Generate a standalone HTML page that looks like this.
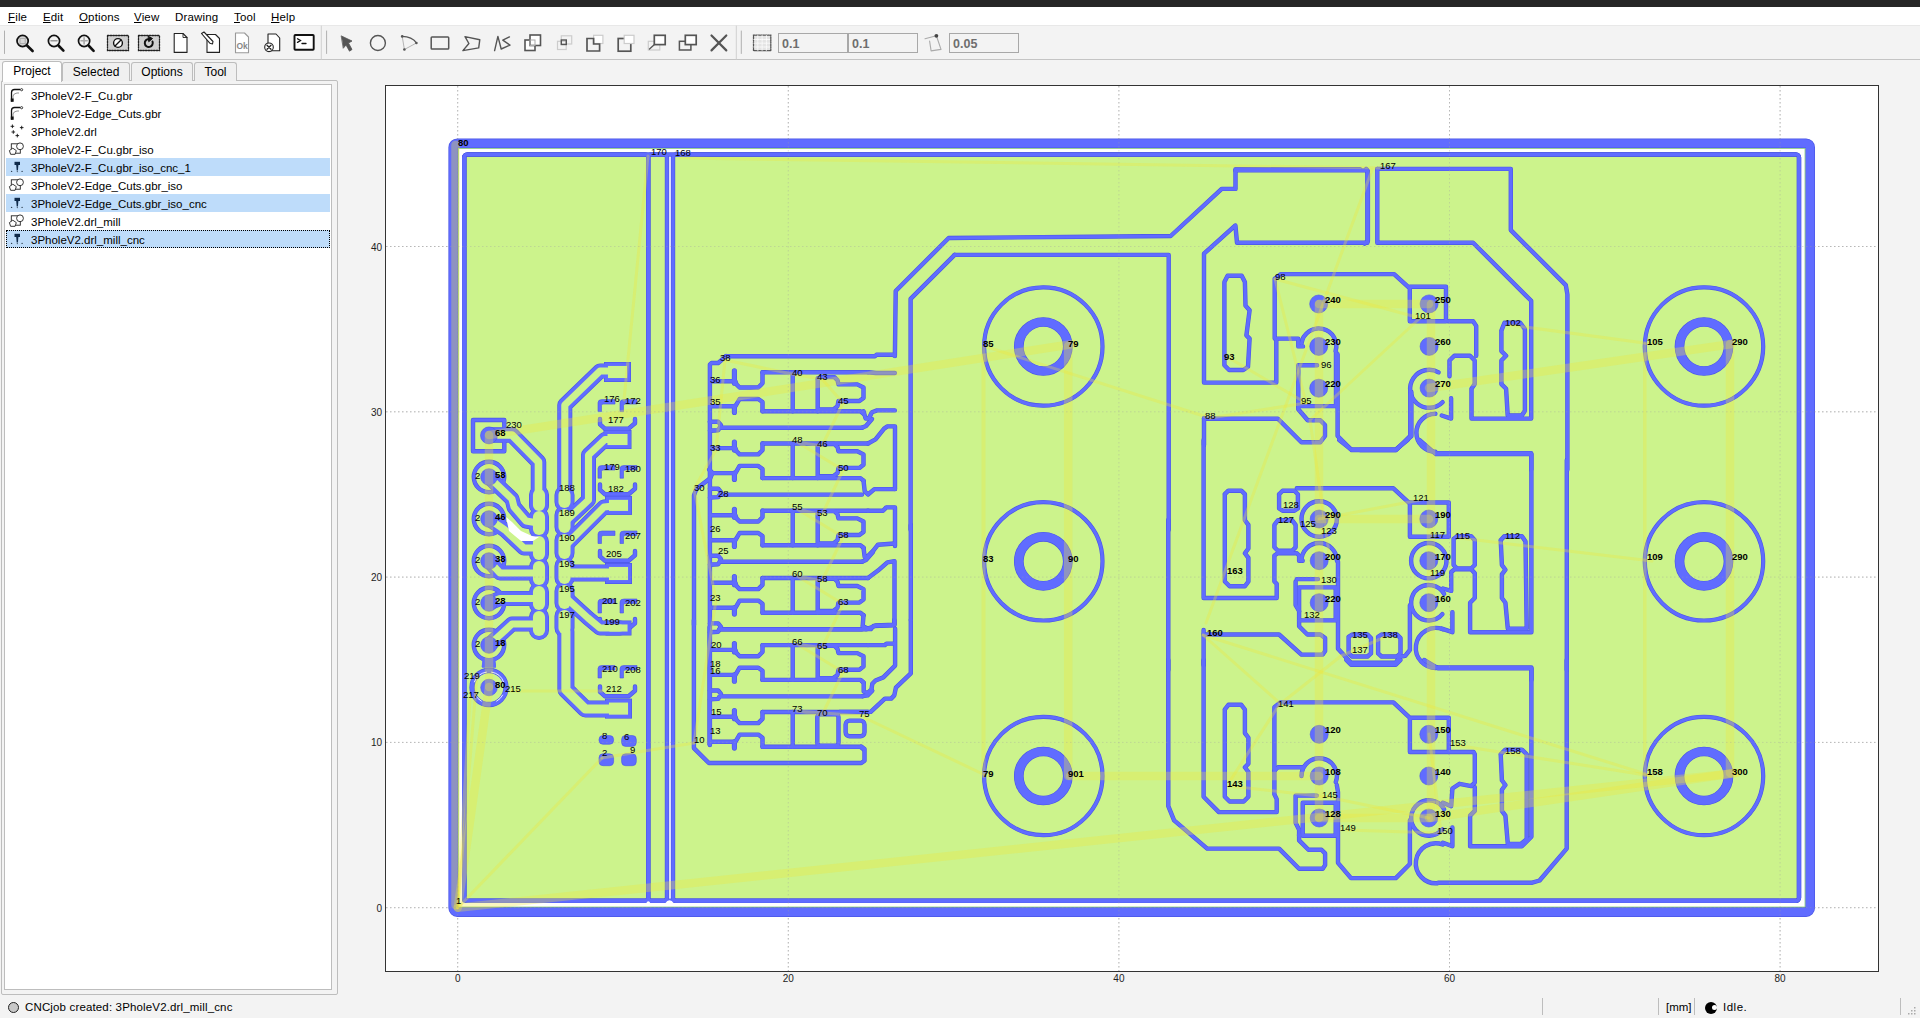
<!DOCTYPE html>
<html><head><meta charset="utf-8">
<style>
*{box-sizing:border-box;margin:0;padding:0}
html,body{width:1920px;height:1018px;overflow:hidden;background:#f3f3f3;font-family:"Liberation Sans",sans-serif;color:#000}
.abs{position:absolute}
#topbar{left:0;top:0;width:1920px;height:7px;background:#262626}
#menubar{left:0;top:7px;width:1920px;height:18px;background:#fff}
.menu{position:absolute;top:3px;font-size:11.5px;line-height:14px;letter-spacing:0.15px}
.menu u{text-decoration:underline;text-underline-offset:1px}
#toolbar{left:0;top:25px;width:1920px;height:35px;background:#f3f3f3;border-top:1px solid #e8e8e8;border-bottom:1px solid #c4c4c4}
.sep{position:absolute;width:1px;background:#b9b9b9}
.tab{position:absolute;top:62px;height:19px;border:1px solid #bdbdbd;border-bottom:none;border-radius:3px 3px 0 0;background:#f0f0f0;font-size:12px;text-align:center;line-height:18px}
.row{position:absolute;left:6px;width:324px;height:18px;font-size:11.5px;line-height:18px}
.row span{position:absolute;left:25px;top:1px}
.sel{background:#bedcfa}
</style></head><body>
<div id="topbar" class="abs"></div>
<div id="menubar" class="abs">
<div class="menu" style="left:8px"><u>F</u>ile</div>
<div class="menu" style="left:43px"><u>E</u>dit</div>
<div class="menu" style="left:79px"><u>O</u>ptions</div>
<div class="menu" style="left:134px"><u>V</u>iew</div>
<div class="menu" style="left:175px">Drawing</div>
<div class="menu" style="left:234px"><u>T</u>ool</div>
<div class="menu" style="left:271px"><u>H</u>elp</div>
</div>
<div id="toolbar" class="abs"></div>
<svg class="abs" style="left:0;top:0" width="1100" height="60">
<g fill="none" stroke-linecap="round">
<line x1="4.5" y1="31" x2="4.5" y2="53.5" stroke="#b0b0b0" stroke-width="1"/>
<!-- zoom fit -->
<circle cx="22.6" cy="41" r="5.6" stroke="#111" stroke-width="1.7" fill="#d8d8d8"/>
<rect x="20" y="38.4" width="5.2" height="5.2" stroke="#aaa" stroke-width="1"/>
<line x1="27" y1="45.5" x2="32.6" y2="51" stroke="#111" stroke-width="2.6"/>
<!-- zoom out -->
<circle cx="54" cy="41" r="5.6" stroke="#111" stroke-width="1.7"/>
<line x1="51" y1="40.8" x2="57" y2="40.8" stroke="#999" stroke-width="1.6"/>
<line x1="58.4" y1="45.5" x2="63.4" y2="50.6" stroke="#111" stroke-width="2.6"/>
<!-- zoom in -->
<circle cx="84.1" cy="41" r="5.6" stroke="#111" stroke-width="1.7"/>
<line x1="81" y1="40.8" x2="87.2" y2="40.8" stroke="#aaa" stroke-width="1.6"/>
<line x1="84.1" y1="37.8" x2="84.1" y2="44" stroke="#aaa" stroke-width="1.6"/>
<line x1="88.5" y1="45.5" x2="93.6" y2="50.8" stroke="#111" stroke-width="2.6"/>
<!-- clear plot -->
<rect x="107.5" y="35.5" width="21" height="15" fill="#d0d0d0" stroke="#222" stroke-width="1.3" stroke-dasharray="1.5,1.2"/>
<circle cx="118" cy="43" r="4.4" stroke="#111" stroke-width="1.4" fill="#fff"/>
<line x1="115" y1="46" x2="121" y2="40" stroke="#111" stroke-width="1.4"/>
<!-- replot -->
<rect x="138.5" y="35.5" width="21" height="15" fill="#d0d0d0" stroke="#222" stroke-width="1.3" stroke-dasharray="1.5,1.2"/>
<path d="M152.5,41.5 A4,4 0 1 1 149,39" stroke="#111" stroke-width="2"/>
<path d="M148.5,36.5 L152.5,38.5 L149,41.5 Z" fill="#111" stroke="#111" stroke-width="1"/>
<!-- new -->
<path d="M174.2,33.5 H183 L187,37.5 V52.4 H174.2 Z" fill="#fff" stroke="#222" stroke-width="1.1" stroke-linejoin="round"/>
<path d="M183,33.5 V37.5 H187" stroke="#222" stroke-width="0.9"/>
<!-- open -->
<path d="M207,34.5 H215.5 L219.5,38.5 V52.4 H207 Z" fill="#fff" stroke="#222" stroke-width="1.1" stroke-linejoin="round"/>
<path d="M201.5,33.5 L204,32 L213,41.5 L212.5,44 L210,43.3 Z" fill="#fff" stroke="#222" stroke-width="1.1" stroke-linejoin="round"/>
<!-- ok -->
<path d="M235.5,33 H244.5 L248.5,37 V52.8 H235.5 Z" fill="#fff" stroke="#999" stroke-width="1.1" stroke-linejoin="round"/>
<text x="236.5" y="48.5" font-family="Liberation Sans" font-weight="bold" font-size="8.5" fill="#888" stroke="none">Ok</text>
<!-- delete -->
<path d="M268,34 H276 L279.7,38 V50.8 H268 Z" fill="#fff" stroke="#222" stroke-width="1.1" stroke-linejoin="round"/>
<circle cx="269" cy="47.3" r="4.3" fill="#fff" stroke="#222" stroke-width="1.1"/>
<path d="M267,45.3 L271,49.3 M271,45.3 L267,49.3" stroke="#222" stroke-width="1.3"/>
<!-- shell -->
<rect x="294.5" y="35" width="19.2" height="14.8" rx="0.8" fill="#fff" stroke="#111" stroke-width="1.9"/>
<path d="M297.5,38.8 L300.5,40.6 L297.5,42.4" stroke="#111" stroke-width="1.3"/>
<line x1="302" y1="43.5" x2="306" y2="43.5" stroke="#111" stroke-width="1.3"/>
<line x1="321.3" y1="26" x2="321.3" y2="59" stroke="#d0d0d0" stroke-width="1"/>
<line x1="326.6" y1="31" x2="326.6" y2="53.5" stroke="#b0b0b0" stroke-width="1"/>
<!-- arrow -->
<path d="M341.5,36 L352,41 L348.5,43 L352,49.5 L349.5,51.2 L346,45 L343.5,48 Z" fill="#555" stroke="#555" stroke-width="0.8" stroke-linejoin="round"/>
<circle cx="377.9" cy="43" r="7.5" stroke="#555" stroke-width="1.4"/>
<path d="M402.2,36.4 Q412,36.5 416.4,43" stroke="#555" stroke-width="1.2"/>
<path d="M402.2,36.4 L404.4,49.5 L416.4,43" stroke="#888" stroke-width="0.6"/>
<circle cx="402.2" cy="36.4" r="1.3" fill="#555" stroke="none"/><circle cx="416.4" cy="43" r="1.3" fill="#555" stroke="none"/><circle cx="404.4" cy="49.5" r="1.3" fill="#555" stroke="none"/>
<rect x="431.2" y="36.9" width="17.5" height="12.1" rx="0.8" stroke="#555" stroke-width="1.5"/>
<path d="M465,36.6 L479.8,39.7 L478.7,47.9 L462.9,50.6 L468.9,43.5 Z" stroke="#555" stroke-width="1.4" stroke-linejoin="round"/>
<path d="M494.6,50.6 L497.9,36.4 L501.2,49 L510,45.1 L502.8,40.2 L509.4,36.9" stroke="#555" stroke-width="1.4" stroke-linejoin="round"/>
<!-- geo ops -->
<rect x="525" y="40" width="10" height="10.5" fill="#fff" stroke="#555" stroke-width="1.6"/>
<rect x="530" y="35" width="10.5" height="10.5" fill="#fff" stroke="#555" stroke-width="1.6"/>
<rect x="530" y="40" width="5" height="5.5" stroke="#aaa" stroke-width="1"/>
<rect x="557.5" y="41.3" width="8.7" height="8.2" stroke="#ccc" stroke-width="1.2"/>
<rect x="561.3" y="35.8" width="10.4" height="8.2" stroke="#ccc" stroke-width="1.2"/>
<rect x="561.3" y="40" width="5" height="4.5" stroke="#555" stroke-width="1.4"/>
<rect x="593.6" y="35.3" width="9.3" height="8.2" stroke="#ccc" stroke-width="1.2" fill="#fff"/>
<path d="M587,38.5 H593.6 V44 H599.6 V51 H587 Z" stroke="#555" stroke-width="1.7"/>
<rect x="618.2" y="38.5" width="12.6" height="12.7" stroke="#555" stroke-width="1.7"/>
<rect x="624.2" y="35.3" width="9.8" height="8.2" stroke="#ccc" stroke-width="1.2" fill="#fff"/>
<rect x="648.3" y="41.3" width="11.5" height="8.7" stroke="#ccc" stroke-width="1.2"/>
<rect x="654.3" y="35.3" width="10.9" height="9.3" stroke="#555" stroke-width="1.7" fill="#fff"/>
<path d="M649.5,49 L654.5,44.5" stroke="#555" stroke-width="1.3"/>
<rect x="679.4" y="41.3" width="11.5" height="8.7" stroke="#555" stroke-width="1.5"/>
<rect x="685.3" y="35.3" width="10.9" height="9.3" stroke="#555" stroke-width="1.7" fill="#fff"/>
<path d="M711.5,35.5 L726.3,50.4 M726.3,35.5 L711.5,50.4" stroke="#555" stroke-width="2.2"/>
<line x1="736.3" y1="26" x2="736.3" y2="59" stroke="#d0d0d0" stroke-width="1"/>
<line x1="741.3" y1="31" x2="741.3" y2="53.5" stroke="#b0b0b0" stroke-width="1"/>
<!-- grid -->
<rect x="753.5" y="35.2" width="17.3" height="15.5" fill="#e4e4e4" stroke="#555" stroke-width="1.3" stroke-dasharray="1.4,1"/>
<path d="M757.8,35.5 V50.5 M762.1,35.5 V50.5 M766.4,35.5 V50.5 M753.8,39.5 H770.5 M753.8,43.2 H770.5 M753.8,47 H770.5" stroke="#fff" stroke-width="0.8" stroke-dasharray="1.2,0.9"/>
<rect x="778.5" y="33.5" width="69" height="19" fill="#f3f3f3" stroke="#a8a8a8" stroke-width="1"/>
<rect x="848.5" y="33.5" width="69" height="19" fill="#f3f3f3" stroke="#a8a8a8" stroke-width="1"/>
<path d="M925,38.8 L936.4,35.8 L941,49.4 L931.1,50.9 L929.6,41.1" stroke="#aaa" stroke-width="1.1" stroke-linejoin="round"/>
<circle cx="936.4" cy="35.8" r="1.9" fill="#444" stroke="none"/>
<rect x="949.5" y="33.5" width="69" height="19" fill="#f3f3f3" stroke="#a8a8a8" stroke-width="1"/>
</g>
<g font-family="Liberation Sans" font-size="12.5" font-weight="bold" fill="#6e6e6e">
<text x="782" y="48">0.1</text><text x="852" y="48">0.1</text><text x="953" y="48">0.05</text>
</g>
</svg>


<!-- tabs -->
<div class="abs" style="left:1px;top:80px;width:337px;height:915px;border:1px solid #bdbdbd;border-radius:2px;background:#f3f3f3"></div>
<div class="tab" style="left:2px;top:61px;width:60px;height:21px;background:#fff">Project</div>
<div class="tab" style="left:62px;width:68px">Selected</div>
<div class="tab" style="left:131px;width:62px">Options</div>
<div class="tab" style="left:194px;width:43px">Tool</div>

<!-- list -->
<div class="abs" style="left:4px;top:84px;width:328px;height:906px;background:#fff;border:1px solid #bdbdbd"></div>
<div id="list">
<div class="row" style="top:86px"><span>3PholeV2-F_Cu.gbr</span></div>
<div class="row" style="top:104px"><span>3PholeV2-Edge_Cuts.gbr</span></div>
<div class="row" style="top:122px"><span>3PholeV2.drl</span></div>
<div class="row" style="top:140px"><span>3PholeV2-F_Cu.gbr_iso</span></div>
<div class="row sel" style="top:158px"><span>3PholeV2-F_Cu.gbr_iso_cnc_1</span></div>
<div class="row" style="top:176px"><span>3PholeV2-Edge_Cuts.gbr_iso</span></div>
<div class="row sel" style="top:194px"><span>3PholeV2-Edge_Cuts.gbr_iso_cnc</span></div>
<div class="row" style="top:212px"><span>3PholeV2.drl_mill</span></div>
<div class="row sel" style="top:230px;border:1px dotted #000"><span style="left:24px;top:0px">3PholeV2.drl_mill_cnc</span></div>
</div>
<svg class="abs" style="left:0;top:0" width="40" height="250"><g transform="translate(0,0)"><path d="M11.5,101.5 V92.5 Q11.5,89.5 14.6,89.5 H20.3" fill="none" stroke="#111" stroke-width="1.3"/><circle cx="21.6" cy="89.7" r="1.1" fill="#fff" stroke="#111" stroke-width="0.8"/><path d="M13,101.5 V96 Q13.5,93.5 17,93 H19" fill="none" stroke="#777" stroke-width="0.8"/><rect x="10.8" y="98.5" width="2.8" height="3.3" fill="#111"/></g><g transform="translate(0,18)"><path d="M11.5,101.5 V92.5 Q11.5,89.5 14.6,89.5 H20.3" fill="none" stroke="#111" stroke-width="1.3"/><circle cx="21.6" cy="89.7" r="1.1" fill="#fff" stroke="#111" stroke-width="0.8"/><path d="M13,101.5 V96 Q13.5,93.5 17,93 H19" fill="none" stroke="#777" stroke-width="0.8"/><rect x="10.8" y="98.5" width="2.8" height="3.3" fill="#111"/></g><g transform="translate(0,0)"><path d="M10.6,126.3 H14.200000000000001 M12.4,124.5 V128.1" stroke="#111" stroke-width="0.9"/><path d="M19.9,127.6 H23.5 M21.7,125.8 V129.4" stroke="#111" stroke-width="0.9"/><path d="M11.5,132 H15.100000000000001 M13.3,130.2 V133.8" stroke="#111" stroke-width="0.9"/><path d="M15.5,135.6 H19.1 M17.3,133.79999999999998 V137.4" stroke="#111" stroke-width="0.9"/></g><g transform="translate(0,0)" fill="none" stroke="#222" stroke-width="0.9"><rect x="11.3" y="143.8" width="9" height="9.4"/><circle cx="20" cy="146.3" r="3.4" fill="#fff"/><path d="M12.8,148.2 L16.3,150.6 L15.1,154.3 L10.6,154.3 L9.4,150.6 Z" fill="#fff"/></g><g transform="translate(0,0)"><rect x="14.5" y="161.8" width="5.5" height="3.2" fill="#0f2a4a"/><path d="M16.2,165 H18.4 L17.9,170.5 H16.7 Z" fill="#0f2a4a"/><circle cx="11.6" cy="171.4" r="0.7" fill="#345"/><circle cx="22.1" cy="171.4" r="0.7" fill="#345"/><circle cx="17.3" cy="171.6" r="0.6" fill="#345"/></g><g transform="translate(0,36)" fill="none" stroke="#222" stroke-width="0.9"><rect x="11.3" y="143.8" width="9" height="9.4"/><circle cx="20" cy="146.3" r="3.4" fill="#fff"/><path d="M12.8,148.2 L16.3,150.6 L15.1,154.3 L10.6,154.3 L9.4,150.6 Z" fill="#fff"/></g><g transform="translate(0,36)"><rect x="14.5" y="161.8" width="5.5" height="3.2" fill="#0f2a4a"/><path d="M16.2,165 H18.4 L17.9,170.5 H16.7 Z" fill="#0f2a4a"/><circle cx="11.6" cy="171.4" r="0.7" fill="#345"/><circle cx="22.1" cy="171.4" r="0.7" fill="#345"/><circle cx="17.3" cy="171.6" r="0.6" fill="#345"/></g><g transform="translate(0,72)" fill="none" stroke="#222" stroke-width="0.9"><rect x="11.3" y="143.8" width="9" height="9.4"/><circle cx="20" cy="146.3" r="3.4" fill="#fff"/><path d="M12.8,148.2 L16.3,150.6 L15.1,154.3 L10.6,154.3 L9.4,150.6 Z" fill="#fff"/></g><g transform="translate(0,72)"><rect x="14.5" y="161.8" width="5.5" height="3.2" fill="#0f2a4a"/><path d="M16.2,165 H18.4 L17.9,170.5 H16.7 Z" fill="#0f2a4a"/><circle cx="11.6" cy="171.4" r="0.7" fill="#345"/><circle cx="22.1" cy="171.4" r="0.7" fill="#345"/><circle cx="17.3" cy="171.6" r="0.6" fill="#345"/></g></svg>

<!-- plot frame -->
<div class="abs" style="left:385px;top:85px;width:1494px;height:887px;background:#fff;border:1px solid #333"></div>

<svg width="1920" height="1018" viewBox="0 0 1920 1018" style="position:absolute;left:0;top:0">
<defs><clipPath id="pc"><rect x="386" y="86" width="1492" height="885"/></clipPath></defs>
<g clip-path="url(#pc)">
<g stroke="#c4c4c4" stroke-width="1" stroke-dasharray="1.5,2.5"><line x1="457.7" y1="86" x2="457.7" y2="971"/><line x1="788.3" y1="86" x2="788.3" y2="971"/><line x1="1118.9" y1="86" x2="1118.9" y2="971"/><line x1="1449.5" y1="86" x2="1449.5" y2="971"/><line x1="1780.1" y1="86" x2="1780.1" y2="971"/><line x1="386" y1="907.7" x2="1878" y2="907.7"/><line x1="386" y1="742.4" x2="1878" y2="742.4"/><line x1="386" y1="577.1" x2="1878" y2="577.1"/><line x1="386" y1="411.8" x2="1878" y2="411.8"/><line x1="386" y1="246.5" x2="1878" y2="246.5"/></g>
<rect x="453.3" y="143.4" width="1356.8" height="768.6" rx="4" fill="#fff" stroke="#4a56e6" stroke-width="9.8"/><rect x="453.3" y="143.4" width="1356.8" height="768.6" rx="4" fill="none" stroke="#606cff" stroke-width="8.4"/><rect x="458.4" y="148.4" width="1346.6" height="758.6" fill="none" stroke="#8ccf7a" stroke-width="0.8"/><rect x="464" y="154.5" width="1335" height="746.5" rx="3" fill="#ccf38c"/><rect x="669" y="152" width="2" height="751" fill="#fff"/>
<g fill="none" stroke="#4a56e6" stroke-linejoin="round" stroke-linecap="round"><path d="M464.2,157.0 L464.2,900.5" stroke-width="4.4"/><rect x="464.2" y="154.5" width="1334.8" height="746.3" rx="3" stroke-width="4.4"/><rect x="464.2" y="154.5" width="184.1" height="746.3" rx="3" stroke-width="4.4"/><rect x="648.3" y="154.5" width="18.7" height="746.3" rx="3" stroke-width="4.4"/><rect x="673.0" y="154.5" width="1126.0" height="746.3" rx="3" stroke-width="4.4"/><circle cx="1043.3" cy="346.5" r="59.2" stroke-width="4.2"/><circle cx="1043.3" cy="346.5" r="24.5" stroke-width="9.7"/><circle cx="1043.3" cy="561.3" r="59.2" stroke-width="4.2"/><circle cx="1043.3" cy="561.3" r="24.5" stroke-width="9.7"/><circle cx="1043.3" cy="776.0" r="59.2" stroke-width="4.2"/><circle cx="1043.3" cy="776.0" r="24.5" stroke-width="9.7"/><circle cx="1704.0" cy="346.5" r="59.2" stroke-width="4.2"/><circle cx="1704.0" cy="346.5" r="24.5" stroke-width="9.7"/><circle cx="1704.0" cy="561.3" r="59.2" stroke-width="4.2"/><circle cx="1704.0" cy="561.3" r="24.5" stroke-width="9.7"/><circle cx="1704.0" cy="776.0" r="59.2" stroke-width="4.2"/><circle cx="1704.0" cy="776.0" r="24.5" stroke-width="9.7"/><path d="M1360.0,169.3 L1235.5,169.3 L1235.5,188.9 L1221.7,188.9 L1170.7,236.0 L948.7,238.0 L895.7,291.0 L894.9,355.8" stroke-width="4.4"/><path d="M954.6,254.9 L1168.7,254.9 L1168.7,529.8" stroke-width="4.4"/><path d="M954.6,254.9 L910.6,298.9 L910.6,529.8" stroke-width="4.4"/><path d="M1367.4,170.4 L1367.4,242.7 L1237.0,242.7 L1235.4,225.4 L1204.0,253.7 L1204.0,382.6 L1276.3,382.6 L1276.3,338.6 L1298.3,338.6 L1298.3,346.4 L1303.0,346.4" stroke-width="4.4"/><path d="M1235.4,170.4 L1367.4,170.4" stroke-width="4.4"/><path d="M1274.7,338.6 L1274.7,278.8 L1281.0,274.1 L1394.1,274.1 L1409.8,288.3 L1409.8,321.3 L1446.0,321.3 L1446.0,286.7 L1409.8,286.7" stroke-width="4.4"/><path d="M1224.4,282.0 L1227.6,275.7 L1241.7,275.7 L1244.9,282.0 L1245.5,305.6 L1249.6,310.3 L1246.4,335.4 L1249.6,338.6 L1248.0,366.8 L1243.3,370.0 L1229.1,370.0 L1224.4,365.3 L1224.4,282.0" stroke-width="4.4"/><path d="M1301.5,343.4 A17.5,17.5 0 1 1 1335.6,350.9" stroke-width="4.4"/><path d="M1337.6,354.3 L1337.6,436.0 L1351.7,450.1 L1395.7,450.1 L1411.4,436.0 L1411.4,392.0" stroke-width="4.4"/><path d="M1204.0,418.7 L1277.9,418.7 L1301.4,442.3 L1320.3,442.3 L1325.0,436.0 L1325.0,425.0 L1320.3,420.3 L1307.7,420.3 L1298.3,409.3 L1298.3,365.3 L1317.1,365.3" stroke-width="4.4"/><path d="M1298.3,406.1 L1336.0,406.1 L1336.0,351.1" stroke-width="4.4"/><path d="M1377.3,168.9 L1510.8,168.9 L1510.8,230.1 L1565.8,285.1 L1567.4,294.5 L1567.4,469.8" stroke-width="4.4"/><path d="M1377.3,168.9 L1377.3,242.7 L1473.1,242.7 L1531.2,300.8 L1531.2,418.6 L1471.5,418.6 L1471.5,388.8 L1474.7,384.1 L1474.7,360.5 L1470.0,355.8 L1454.3,355.8 L1449.5,360.5 L1449.5,376.2" stroke-width="4.4"/><path d="M1448.0,321.2 L1473.1,321.2 L1476.2,325.9 L1476.2,355.8" stroke-width="4.4"/><path d="M1366.3,168.9 L1367.9,173.6 L1367.9,241.1 L1364.7,243.6" stroke-width="4.4"/><path d="M1501.4,330.6 L1504.5,322.8 L1520.2,322.8 L1524.9,329.1 L1524.9,410.8 L1521.8,415.5 L1507.7,415.5 L1506.1,388.8 L1501.4,384.1 L1501.4,360.5 L1506.1,355.8 L1501.4,351.1 L1501.4,330.6" stroke-width="4.4"/><path d="M1442.6,402.2 A19.0,19.0 0 1 1 1438.6,372.3" stroke-width="4.4"/><path d="M1451.1,398.2 L1451.1,418.6 L1441.7,415.5" stroke-width="4.4"/><path d="M1435.4,451.8 A19.0,19.0 0 0 1 1435.4,413.8" stroke-width="4.4"/><path d="M1435.4,453.2 L1531.2,453.2 L1531.2,469.8" stroke-width="4.4"/><path d="M1410.3,391.9 L1410.3,435.9 L1396.1,450.0 L1360.0,450.0" stroke-width="4.4"/><path d="M1203.6,440.0 L1203.6,598.0 L1276.7,598.0 L1276.7,583.8 L1274.4,581.5 L1274.4,555.5 L1277.9,553.2 L1296.8,553.2 L1299.1,555.5 L1299.1,560.7 L1302.7,560.7" stroke-width="4.4"/><path d="M1224.8,494.2 L1228.4,490.7 L1241.3,490.7 L1244.9,494.2 L1244.9,520.2 L1248.4,524.9 L1248.4,548.5 L1244.9,553.2 L1248.4,557.9 L1248.4,581.5 L1244.9,586.2 L1229.6,586.2 L1224.8,581.5 L1224.8,494.2" stroke-width="4.4"/><path d="M1296.8,488.3 L1393.4,488.3 L1409.9,503.7 L1409.9,536.7 L1448.8,536.7 L1448.8,502.5 L1409.9,502.5" stroke-width="4.4"/><path d="M1279.1,494.2 L1282.6,490.7 L1294.4,490.7 L1297.9,494.2 L1297.9,508.4 L1294.4,510.7 L1282.6,510.7 L1279.1,508.4 L1279.1,494.2" stroke-width="4.4"/><path d="M1274.4,524.9 L1277.9,520.2 L1292.0,520.2 L1295.6,524.9 L1295.6,547.3 L1292.0,550.8 L1277.9,550.8 L1274.4,547.3 L1274.4,524.9" stroke-width="4.4"/><circle cx="1319.2" cy="519.0" r="17.7" stroke-width="4.4"/><path d="M1301.5,560.7 A17.7,17.7 0 0 1 1336.9,560.7" stroke-width="4.4"/><path d="M1338.0,561.4 L1338.0,648.7 L1351.0,662.8 L1395.8,662.8 L1399.3,656.9 L1405.2,655.8 L1409.9,649.9 L1409.9,605.1" stroke-width="4.4"/><path d="M1299.1,587.4 L1335.7,587.4 L1335.7,620.4 L1299.1,620.4 L1299.1,587.4" stroke-width="4.4"/><path d="M1296.8,579.1 L1318.0,579.1" stroke-width="4.4"/><path d="M1295.6,581.5 L1295.6,605.1 L1299.1,611.0" stroke-width="4.4"/><path d="M1203.6,634.5 L1279.1,634.5 L1301.5,654.6 L1322.7,654.6 L1325.1,651.0 L1325.1,638.1 L1320.3,634.5 L1307.4,634.5 L1299.1,626.3 L1299.1,620.4" stroke-width="4.4"/><path d="M1348.6,636.9 L1352.2,634.5 L1367.5,634.5 L1371.0,638.1 L1371.0,653.4 L1367.5,656.5 L1352.2,656.5 L1348.6,653.4 L1348.6,636.9" stroke-width="4.4"/><path d="M1378.1,636.9 L1381.6,634.5 L1397.0,634.5 L1400.5,638.1 L1400.5,653.4 L1397.0,656.5 L1381.6,656.5 L1378.1,653.4 L1378.1,636.9" stroke-width="4.4"/><path d="M1339.2,440.0 L1351.0,449.4 L1395.8,449.4 L1407.6,440.0" stroke-width="4.4"/><path d="M1419.4,440.0 L1435.9,454.1 L1531.4,454.1 L1531.4,632.2 L1470.1,632.2 L1470.1,602.7 L1474.8,598.0 L1474.8,573.2 L1471.2,569.2 L1454.7,569.2 L1451.2,572.0 L1451.2,590.9 L1443.0,588.5" stroke-width="4.4"/><path d="M1453.6,539.0 L1457.1,536.2 L1471.2,536.2 L1474.8,540.2 L1474.8,565.0 L1471.2,568.5 L1457.1,568.5 L1453.6,565.0 L1453.6,539.0" stroke-width="4.4"/><path d="M1500.7,540.2 L1504.3,536.2 L1521.9,536.2 L1525.5,541.4 L1526.7,628.6 L1507.8,628.6 L1505.4,602.7 L1501.9,598.0 L1501.9,574.4 L1505.4,569.7 L1501.9,565.0 L1500.7,540.2" stroke-width="4.4"/><circle cx="1428.8" cy="560.7" r="17.7" stroke-width="4.4"/><path d="M1442.4,614.1 A17.7,17.7 0 1 1 1444.1,593.8" stroke-width="4.4"/><path d="M1452.4,612.1 L1452.4,632.2 L1441.8,628.6" stroke-width="4.4"/><path d="M1437.6,667.9 A20.0,20.0 0 1 1 1442.7,629.2" stroke-width="4.4"/><path d="M1437.1,667.5 L1531.4,667.5 L1531.4,680.0" stroke-width="4.4"/><path d="M1168.3,660.0 L1168.3,806.2 L1174.1,820.3 L1207.2,848.6 L1279.1,848.6 L1299.1,868.7 L1322.7,868.7 L1325.1,865.1 L1325.1,853.4 L1321.5,849.8 L1308.5,849.8 L1299.1,840.4 L1299.1,834.5" stroke-width="4.4"/><path d="M1203.6,660.0 L1203.6,796.8 L1218.9,812.1 L1276.7,812.1 L1276.7,799.1 L1274.4,794.4 L1274.4,707.2 L1280.3,702.4 L1393.4,702.4 L1409.9,717.8 L1409.9,752.0 L1448.8,752.0 L1448.8,717.8 L1409.9,717.8" stroke-width="4.4"/><path d="M1274.4,770.8 L1277.9,767.3 L1302.7,767.3" stroke-width="4.4"/><path d="M1224.8,709.5 L1228.4,704.8 L1241.3,704.8 L1244.9,709.5 L1244.9,733.1 L1248.4,737.8 L1248.4,763.7 L1244.9,767.3 L1248.4,772.0 L1248.4,796.8 L1243.7,801.5 L1229.6,801.5 L1224.8,796.8 L1224.8,709.5" stroke-width="4.4"/><path d="M1448.8,752.0 L1473.6,752.0 L1474.8,754.3 L1474.8,782.6 L1471.2,786.1 L1459.5,783.8 L1452.4,788.5 L1451.2,806.2 L1443.0,802.7" stroke-width="4.4"/><path d="M1301.5,776.0 A17.7,17.7 0 1 1 1335.8,782.1" stroke-width="4.4"/><path d="M1336.8,785.0 L1338.0,792.0 L1338.0,862.8 L1351.0,878.1 L1395.8,878.1 L1409.9,864.0 L1409.9,820.3" stroke-width="4.4"/><path d="M1442.4,829.4 A17.7,17.7 0 1 1 1444.1,809.1" stroke-width="4.4"/><path d="M1302.7,802.7 L1335.7,802.7 L1335.7,835.7 L1302.7,835.7 L1302.7,802.7" stroke-width="4.4"/><path d="M1316.8,795.6 L1295.6,795.6 L1295.6,822.7 L1299.1,829.8 L1299.1,835.7" stroke-width="4.4"/><path d="M1452.4,827.4 L1452.4,846.3 L1443.0,842.7" stroke-width="4.4"/><path d="M1437.6,883.2 A20.0,20.0 0 1 1 1442.7,844.5" stroke-width="4.4"/><path d="M1438.2,882.8 L1531.4,882.8 L1539.6,880.5 L1566.7,848.6 L1566.7,660.0" stroke-width="4.4"/><path d="M1474.8,787.3 L1474.8,810.9 L1470.1,815.6 L1470.1,846.3 L1521.9,846.3 L1531.4,836.8 L1531.4,668.3 L1438.2,668.3 L1424.1,660.0" stroke-width="4.4"/><path d="M1500.7,754.3 L1505.4,749.6 L1521.9,749.6 L1526.7,754.3 L1526.7,839.2 L1520.8,843.9 L1507.8,843.9 L1505.4,815.6 L1501.9,810.9 L1501.9,789.7 L1505.4,785.0 L1501.9,780.3 L1500.7,754.3" stroke-width="4.4"/><path d="M1346.3,660.0 L1351.0,664.7 L1395.8,664.7 L1400.5,660.0" stroke-width="4.4"/><path d="M1168.3,520.0 L1168.3,670.0" stroke-width="4.4"/><path d="M1566.8,460.0 L1566.8,670.0" stroke-width="4.4"/><path d="M710.4,381.2 L733.3,381.2" stroke-width="4.4"/><path d="M734.4,370.8 L734.4,383.2" stroke-width="5.1"/><path d="M735.4,381.2 L736.5,384.4 L739.6,387.5 L758.3,387.5 L762.5,383.3 L762.5,372.3" stroke-width="4.4"/><path d="M762.5,372.3 L868.0,372.3" stroke-width="4.4"/><path d="M792.7,372.3 L792.7,411.2" stroke-width="4.4"/><path d="M817.7,411.2 L817.7,378.2 L820.8,377.1 L834.4,377.1 L837.5,380.2 L838.5,384.4 L857.3,384.4 L863.5,387.5 L863.5,397.9 L859.4,401.0 L838.5,401.0 L837.5,406.2 L833.3,409.4 L819.0,409.4" stroke-width="4.4"/><path d="M710.4,406.2 L733.3,406.2" stroke-width="4.4"/><path d="M734.4,406.2 L734.4,412.5" stroke-width="5.1"/><path d="M735.4,406.2 L739.6,399.0 L758.3,399.0 L762.5,402.1 L762.5,411.2" stroke-width="4.4"/><path d="M762.5,411.2 L860.4,411.2 L863.5,413.7" stroke-width="4.4"/><path d="M709.9,421.8 L718.2,421.8 L721.0,425.2 L718.2,430.2 L709.9,430.7" stroke-width="4.4"/><path d="M721.0,427.7 L862.0,427.7" stroke-width="4.4"/><path d="M710.4,448.1 L733.3,448.1" stroke-width="4.4"/><path d="M734.4,442.0 L734.4,450.1" stroke-width="5.1"/><path d="M735.4,448.1 L736.5,451.3 L739.6,454.4 L758.3,454.4 L762.5,450.2 L762.5,443.5" stroke-width="4.4"/><path d="M762.5,443.5 L868.0,443.5" stroke-width="4.4"/><path d="M792.7,443.5 L792.7,478.1" stroke-width="4.4"/><path d="M817.7,478.1 L817.7,445.1 L820.8,444.0 L834.4,444.0 L837.5,447.1 L838.5,451.3 L857.3,451.3 L863.5,454.4 L863.5,464.8 L859.4,467.9 L838.5,467.9 L837.5,473.1 L833.3,476.3 L819.0,476.3" stroke-width="4.4"/><path d="M710.4,473.1 L733.3,473.1" stroke-width="4.4"/><path d="M734.4,473.1 L734.4,479.4" stroke-width="5.1"/><path d="M735.4,473.1 L739.6,465.9 L758.3,465.9 L762.5,469.0 L762.5,478.1" stroke-width="4.4"/><path d="M762.5,478.1 L860.4,478.1 L863.5,480.6" stroke-width="4.4"/><path d="M709.9,488.7 L718.2,488.7 L721.0,492.1 L718.2,497.1 L709.9,497.6" stroke-width="4.4"/><path d="M721.0,494.6 L862.0,494.6" stroke-width="4.4"/><path d="M710.4,515.2 L733.3,515.2" stroke-width="4.4"/><path d="M734.4,509.3 L734.4,517.2" stroke-width="5.1"/><path d="M735.4,515.2 L736.5,518.4 L739.6,521.5 L758.3,521.5 L762.5,517.3 L762.5,510.8" stroke-width="4.4"/><path d="M762.5,510.8 L868.0,510.8" stroke-width="4.4"/><path d="M792.7,510.8 L792.7,545.2" stroke-width="4.4"/><path d="M817.7,545.2 L817.7,512.2 L820.8,511.1 L834.4,511.1 L837.5,514.2 L838.5,518.4 L857.3,518.4 L863.5,521.5 L863.5,531.9 L859.4,535.0 L838.5,535.0 L837.5,540.2 L833.3,543.4 L819.0,543.4" stroke-width="4.4"/><path d="M710.4,540.2 L733.3,540.2" stroke-width="4.4"/><path d="M734.4,540.2 L734.4,546.5" stroke-width="5.1"/><path d="M735.4,540.2 L739.6,533.0 L758.3,533.0 L762.5,536.1 L762.5,545.2" stroke-width="4.4"/><path d="M762.5,545.2 L860.4,545.2 L863.5,547.7" stroke-width="4.4"/><path d="M709.9,555.8 L718.2,555.8 L721.0,559.2 L718.2,564.2 L709.9,564.7" stroke-width="4.4"/><path d="M721.0,561.7 L862.0,561.7" stroke-width="4.4"/><path d="M710.4,582.8 L733.3,582.8" stroke-width="4.4"/><path d="M734.4,576.5 L734.4,584.8" stroke-width="5.1"/><path d="M735.4,582.8 L736.5,586.0 L739.6,589.1 L758.3,589.1 L762.5,584.9 L762.5,578.0" stroke-width="4.4"/><path d="M762.5,578.0 L868.0,578.0" stroke-width="4.4"/><path d="M792.7,578.0 L792.7,612.8" stroke-width="4.4"/><path d="M817.7,612.8 L817.7,579.8 L820.8,578.7 L834.4,578.7 L837.5,581.8 L838.5,586.0 L857.3,586.0 L863.5,589.1 L863.5,599.5 L859.4,602.6 L838.5,602.6 L837.5,607.8 L833.3,611.0 L819.0,611.0" stroke-width="4.4"/><path d="M710.4,607.8 L733.3,607.8" stroke-width="4.4"/><path d="M734.4,607.8 L734.4,614.1" stroke-width="5.1"/><path d="M735.4,607.8 L739.6,600.6 L758.3,600.6 L762.5,603.7 L762.5,612.8" stroke-width="4.4"/><path d="M762.5,612.8 L860.4,612.8 L863.5,615.3" stroke-width="4.4"/><path d="M709.9,623.4 L718.2,623.4 L721.0,626.8 L718.2,631.8 L709.9,632.3" stroke-width="4.4"/><path d="M721.0,629.3 L862.0,629.3" stroke-width="4.4"/><path d="M710.4,649.9 L733.3,649.9" stroke-width="4.4"/><path d="M734.4,643.6 L734.4,651.9" stroke-width="5.1"/><path d="M735.4,649.9 L736.5,653.1 L739.6,656.2 L758.3,656.2 L762.5,652.0 L762.5,645.1" stroke-width="4.4"/><path d="M762.5,645.1 L868.0,645.1" stroke-width="4.4"/><path d="M792.7,645.1 L792.7,679.9" stroke-width="4.4"/><path d="M817.7,679.9 L817.7,646.9 L820.8,645.8 L834.4,645.8 L837.5,648.9 L838.5,653.1 L857.3,653.1 L863.5,656.2 L863.5,666.6 L859.4,669.7 L838.5,669.7 L837.5,674.9 L833.3,678.1 L819.0,678.1" stroke-width="4.4"/><path d="M710.4,674.9 L733.3,674.9" stroke-width="4.4"/><path d="M734.4,674.9 L734.4,681.2" stroke-width="5.1"/><path d="M735.4,674.9 L739.6,667.7 L758.3,667.7 L762.5,670.8 L762.5,679.9" stroke-width="4.4"/><path d="M762.5,679.9 L860.4,679.9 L863.5,682.4" stroke-width="4.4"/><path d="M709.9,690.5 L718.2,690.5 L721.0,693.9 L718.2,698.9 L709.9,699.4" stroke-width="4.4"/><path d="M721.0,696.4 L862.0,696.4" stroke-width="4.4"/><path d="M710.4,716.8 L733.3,716.8" stroke-width="4.4"/><path d="M734.4,710.5 L734.4,718.8" stroke-width="5.1"/><path d="M735.4,716.8 L736.5,720.0 L739.6,723.1 L758.3,723.1 L762.5,718.9 L762.5,712.0" stroke-width="4.4"/><path d="M762.5,712.0 L868.0,712.0" stroke-width="4.4"/><path d="M792.7,712.0 L792.7,746.8" stroke-width="4.4"/><rect x="817.3" y="714.3" width="21.2" height="31.4" rx="3" stroke-width="4.4"/><rect x="845.6" y="720.6" width="18.9" height="15.7" rx="4" stroke-width="4.4"/><path d="M710.4,741.8 L733.3,741.8" stroke-width="4.4"/><path d="M734.4,741.8 L734.4,748.1" stroke-width="5.1"/><path d="M735.4,741.8 L739.6,734.6 L758.3,734.6 L762.5,737.7 L762.5,746.8" stroke-width="4.4"/><path d="M762.5,746.8 L860.4,746.8 L863.5,749.3" stroke-width="4.4"/><path d="M726.0,356.2 L875.0,356.2 L876.5,354.7 L892.7,354.7 L894.8,356.0" stroke-width="4.4"/><path d="M709.9,421.9 L709.9,364.6 L711.5,363.0 L718.2,363.0 L726.0,356.2" stroke-width="4.4"/><path d="M868.0,372.3 L876.0,373.0 L894.8,373.0" stroke-width="4.4"/><path d="M863.5,411.2 L865.6,418.5 L868.8,418.5 L871.9,412.2 L877.0,410.4 L894.8,410.4" stroke-width="4.4"/><path d="M862.0,427.7 L866.0,426.0 L872.0,419.0" stroke-width="4.4"/><path d="M868.0,443.5 L875.5,439.4 L884.1,428.6 L887.4,426.4 L895.0,426.4 L895.0,489.0" stroke-width="4.4"/><path d="M863.5,480.6 L864.7,491.2 L868.0,494.5 L874.4,489.1 L895.0,489.1" stroke-width="4.4"/><path d="M868.0,510.8 L883.0,510.8 L886.3,507.4 L895.0,507.4 L895.0,546.0" stroke-width="4.4"/><path d="M863.5,547.7 L864.7,557.0 L866.2,557.7 L873.3,550.6 L878.0,544.7 L894.5,543.5" stroke-width="4.4"/><path d="M862.0,561.7 L866.0,560.0 L873.0,552.0" stroke-width="4.4"/><path d="M868.0,578.0 L878.0,570.6 L887.4,562.4 L894.5,561.2 L894.5,624.9" stroke-width="4.4"/><path d="M863.5,615.3 L862.7,626.0 L866.2,629.1 L870.9,629.1 L873.3,626.0 L893.3,625.3" stroke-width="4.4"/><path d="M719.0,629.4 L866.0,629.4" stroke-width="4.4"/><path d="M868.0,645.1 L884.9,645.1 L886.5,643.6 L894.3,643.6" stroke-width="4.4"/><path d="M895.1,628.6 L895.1,665.6 L883.3,677.4 L875.5,680.5 L872.3,683.7 L871.5,689.2 L867.6,693.1 L863.7,691.5 L863.7,682.9 L861.3,680.5" stroke-width="4.4"/><path d="M862.9,696.2 L867.6,695.4 L872.3,690.7" stroke-width="4.4"/><path d="M910.8,620.0 L910.8,673.4 L895.9,687.6 L894.3,695.4 L891.2,698.6 L884.9,698.6 L870.7,711.9 L840.1,711.9 L837.7,712.7" stroke-width="4.4"/><path d="M862.9,626.3 L867.6,628.6 L872.3,627.1 L875.5,625.5 L894.3,624.7 L894.3,620.0" stroke-width="4.4"/><path d="M861.3,746.5 L864.5,748.9 L864.5,760.7 L861.3,763.0 L708.9,763.0 L693.9,748.1 L693.9,620.0" stroke-width="4.4"/><path d="M709.6,627.1 L709.6,744.2" stroke-width="4.4"/><path d="M709.9,421.9 L709.9,745.0" stroke-width="4.4"/><path d="M910.8,525.0 L910.8,620.0" stroke-width="4.4"/><path d="M504.3,426.4 L504.3,420.0 L473.0,420.0 L473.0,451.3 L504.3,451.3 L504.3,440.5" stroke-width="4.4"/><path d="M489.0,435.0 L512.0,435.0 L538.5,462.0 L538.5,500.0" stroke-width="15.5"/><path d="M489.0,477.0 L512.0,499.0 L514.0,507.0 L526.0,521.0 L538.0,523.0" stroke-width="15.0"/><path d="M489.0,519.0 L505.0,530.0 L524.0,548.0 L538.0,548.0" stroke-width="15.0"/><path d="M489.0,561.0 L500.0,573.0 L538.0,573.0" stroke-width="15.0"/><path d="M489.0,603.0 L500.0,598.5 L538.0,598.5" stroke-width="15.0"/><path d="M489.0,645.0 L512.0,624.0 L538.0,624.0" stroke-width="15.0"/><path d="M539.0,495.0 L539.0,505.0" stroke-width="20.0"/><path d="M539.0,517.0 L539.0,529.0" stroke-width="20.0"/><path d="M539.0,542.0 L539.0,554.0" stroke-width="20.0"/><path d="M539.0,567.0 L539.0,579.0" stroke-width="20.0"/><path d="M539.0,592.0 L539.0,604.0" stroke-width="20.0"/><path d="M539.0,617.0 L539.0,630.0" stroke-width="20.0"/><path d="M564.5,495.0 L564.5,502.0" stroke-width="20.0"/><path d="M564.5,515.0 L564.5,527.0" stroke-width="20.0"/><path d="M564.5,540.0 L564.5,553.0" stroke-width="20.0"/><path d="M564.5,566.0 L564.5,578.0" stroke-width="20.0"/><path d="M564.5,591.0 L564.5,603.0" stroke-width="20.0"/><path d="M564.5,616.0 L564.5,628.0" stroke-width="20.0"/><path d="M564.8,499.0 L564.8,405.0 L600.0,371.0 L620.0,371.0" stroke-width="15.0"/><path d="M614.0,372.0 L621.0,372.0" stroke-width="20.0" stroke-linecap="square" stroke-linejoin="miter"/><path d="M565.0,522.0 L588.5,500.0 L588.5,455.0 L605.0,439.5 L620.0,439.5" stroke-width="15.0"/><path d="M613.0,439.5 L622.0,439.5" stroke-width="19.0" stroke-linecap="square" stroke-linejoin="miter"/><path d="M565.0,546.0 L604.0,507.0 L620.0,505.4" stroke-width="15.0"/><path d="M614.5,505.4 L622.5,505.4" stroke-width="19.0" stroke-linecap="square" stroke-linejoin="miter"/><path d="M565.0,573.0 L620.0,573.0" stroke-width="17.0"/><path d="M615.5,573.5 L621.5,573.5" stroke-width="21.0" stroke-linecap="square" stroke-linejoin="miter"/><path d="M565.0,597.0 L588.0,618.0 L600.0,628.0 L620.0,628.0" stroke-width="15.0"/><path d="M613.0,628.0 L624.0,628.0" stroke-width="15.0" stroke-linecap="square" stroke-linejoin="miter"/><path d="M565.9,631.3 L565.9,689.7 L585.4,709.0 L620.0,709.0" stroke-width="17.0"/><path d="M615.0,708.6 L622.0,708.6" stroke-width="20.0" stroke-linecap="square" stroke-linejoin="miter"/><path d="M600.0,418.9 L600.0,424.3 L604.8,428.6 L628.6,428.6 L635.0,423.2 L635.0,418.9" stroke-width="4.4"/><path d="M600.0,484.5 L600.0,489.9 L604.8,494.2 L628.6,494.2 L635.0,488.8 L635.0,484.5" stroke-width="4.4"/><path d="M600.0,551.0 L600.0,556.4 L604.8,560.7 L628.6,560.7 L635.0,555.3 L635.0,551.0" stroke-width="4.4"/><path d="M600.0,619.0 L600.0,624.4 L604.8,628.7 L628.6,628.7 L635.0,623.3 L635.0,619.0" stroke-width="4.4"/><path d="M600.0,686.5 L600.0,691.9 L604.8,696.2 L628.6,696.2 L635.0,690.8 L635.0,686.5" stroke-width="4.4"/><circle cx="489.0" cy="477.0" r="15.2" stroke-width="4.4"/><circle cx="489.0" cy="519.0" r="15.2" stroke-width="4.4"/><circle cx="489.0" cy="561.0" r="15.2" stroke-width="4.4"/><circle cx="489.0" cy="603.0" r="15.2" stroke-width="4.4"/><circle cx="489.0" cy="645.0" r="15.2" stroke-width="4.4"/><circle cx="489.0" cy="687.5" r="17.0" stroke-width="5.3"/><path d="M483.5,659 L494.5,659 L495.5,667 L482.5,667 Z" stroke-width="1.1" fill="#606cff"/><path d="M709.2,469.6 L712.4,472.9 L710.2,478.3 L696.2,489.1 L694.0,495.5 L694.0,625.0" stroke-width="4.4"/><path d="M1204.0,418.0 L1204.0,445.0" stroke-width="4.4"/><path d="M1203.6,630.0 L1203.6,665.0" stroke-width="4.4"/></g>
<g fill="none" stroke="#606cff" stroke-linejoin="round" stroke-linecap="round"><path d="M464.2,157.0 L464.2,900.5" stroke-width="3.2"/><rect x="464.2" y="154.5" width="1334.8" height="746.3" rx="3" stroke-width="3.2"/><rect x="464.2" y="154.5" width="184.1" height="746.3" rx="3" stroke-width="3.2"/><rect x="648.3" y="154.5" width="18.7" height="746.3" rx="3" stroke-width="3.2"/><rect x="673.0" y="154.5" width="1126.0" height="746.3" rx="3" stroke-width="3.2"/><circle cx="1043.3" cy="346.5" r="59.2" stroke-width="3.0"/><circle cx="1043.3" cy="346.5" r="24.5" stroke-width="8.5"/><circle cx="1043.3" cy="561.3" r="59.2" stroke-width="3.0"/><circle cx="1043.3" cy="561.3" r="24.5" stroke-width="8.5"/><circle cx="1043.3" cy="776.0" r="59.2" stroke-width="3.0"/><circle cx="1043.3" cy="776.0" r="24.5" stroke-width="8.5"/><circle cx="1704.0" cy="346.5" r="59.2" stroke-width="3.0"/><circle cx="1704.0" cy="346.5" r="24.5" stroke-width="8.5"/><circle cx="1704.0" cy="561.3" r="59.2" stroke-width="3.0"/><circle cx="1704.0" cy="561.3" r="24.5" stroke-width="8.5"/><circle cx="1704.0" cy="776.0" r="59.2" stroke-width="3.0"/><circle cx="1704.0" cy="776.0" r="24.5" stroke-width="8.5"/><path d="M1360.0,169.3 L1235.5,169.3 L1235.5,188.9 L1221.7,188.9 L1170.7,236.0 L948.7,238.0 L895.7,291.0 L894.9,355.8" stroke-width="3.2"/><path d="M954.6,254.9 L1168.7,254.9 L1168.7,529.8" stroke-width="3.2"/><path d="M954.6,254.9 L910.6,298.9 L910.6,529.8" stroke-width="3.2"/><path d="M1367.4,170.4 L1367.4,242.7 L1237.0,242.7 L1235.4,225.4 L1204.0,253.7 L1204.0,382.6 L1276.3,382.6 L1276.3,338.6 L1298.3,338.6 L1298.3,346.4 L1303.0,346.4" stroke-width="3.2"/><path d="M1235.4,170.4 L1367.4,170.4" stroke-width="3.2"/><path d="M1274.7,338.6 L1274.7,278.8 L1281.0,274.1 L1394.1,274.1 L1409.8,288.3 L1409.8,321.3 L1446.0,321.3 L1446.0,286.7 L1409.8,286.7" stroke-width="3.2"/><path d="M1224.4,282.0 L1227.6,275.7 L1241.7,275.7 L1244.9,282.0 L1245.5,305.6 L1249.6,310.3 L1246.4,335.4 L1249.6,338.6 L1248.0,366.8 L1243.3,370.0 L1229.1,370.0 L1224.4,365.3 L1224.4,282.0" stroke-width="3.2"/><path d="M1301.5,343.4 A17.5,17.5 0 1 1 1335.6,350.9" stroke-width="3.2"/><path d="M1337.6,354.3 L1337.6,436.0 L1351.7,450.1 L1395.7,450.1 L1411.4,436.0 L1411.4,392.0" stroke-width="3.2"/><path d="M1204.0,418.7 L1277.9,418.7 L1301.4,442.3 L1320.3,442.3 L1325.0,436.0 L1325.0,425.0 L1320.3,420.3 L1307.7,420.3 L1298.3,409.3 L1298.3,365.3 L1317.1,365.3" stroke-width="3.2"/><path d="M1298.3,406.1 L1336.0,406.1 L1336.0,351.1" stroke-width="3.2"/><path d="M1377.3,168.9 L1510.8,168.9 L1510.8,230.1 L1565.8,285.1 L1567.4,294.5 L1567.4,469.8" stroke-width="3.2"/><path d="M1377.3,168.9 L1377.3,242.7 L1473.1,242.7 L1531.2,300.8 L1531.2,418.6 L1471.5,418.6 L1471.5,388.8 L1474.7,384.1 L1474.7,360.5 L1470.0,355.8 L1454.3,355.8 L1449.5,360.5 L1449.5,376.2" stroke-width="3.2"/><path d="M1448.0,321.2 L1473.1,321.2 L1476.2,325.9 L1476.2,355.8" stroke-width="3.2"/><path d="M1366.3,168.9 L1367.9,173.6 L1367.9,241.1 L1364.7,243.6" stroke-width="3.2"/><path d="M1501.4,330.6 L1504.5,322.8 L1520.2,322.8 L1524.9,329.1 L1524.9,410.8 L1521.8,415.5 L1507.7,415.5 L1506.1,388.8 L1501.4,384.1 L1501.4,360.5 L1506.1,355.8 L1501.4,351.1 L1501.4,330.6" stroke-width="3.2"/><path d="M1442.6,402.2 A19.0,19.0 0 1 1 1438.6,372.3" stroke-width="3.2"/><path d="M1451.1,398.2 L1451.1,418.6 L1441.7,415.5" stroke-width="3.2"/><path d="M1435.4,451.8 A19.0,19.0 0 0 1 1435.4,413.8" stroke-width="3.2"/><path d="M1435.4,453.2 L1531.2,453.2 L1531.2,469.8" stroke-width="3.2"/><path d="M1410.3,391.9 L1410.3,435.9 L1396.1,450.0 L1360.0,450.0" stroke-width="3.2"/><path d="M1203.6,440.0 L1203.6,598.0 L1276.7,598.0 L1276.7,583.8 L1274.4,581.5 L1274.4,555.5 L1277.9,553.2 L1296.8,553.2 L1299.1,555.5 L1299.1,560.7 L1302.7,560.7" stroke-width="3.2"/><path d="M1224.8,494.2 L1228.4,490.7 L1241.3,490.7 L1244.9,494.2 L1244.9,520.2 L1248.4,524.9 L1248.4,548.5 L1244.9,553.2 L1248.4,557.9 L1248.4,581.5 L1244.9,586.2 L1229.6,586.2 L1224.8,581.5 L1224.8,494.2" stroke-width="3.2"/><path d="M1296.8,488.3 L1393.4,488.3 L1409.9,503.7 L1409.9,536.7 L1448.8,536.7 L1448.8,502.5 L1409.9,502.5" stroke-width="3.2"/><path d="M1279.1,494.2 L1282.6,490.7 L1294.4,490.7 L1297.9,494.2 L1297.9,508.4 L1294.4,510.7 L1282.6,510.7 L1279.1,508.4 L1279.1,494.2" stroke-width="3.2"/><path d="M1274.4,524.9 L1277.9,520.2 L1292.0,520.2 L1295.6,524.9 L1295.6,547.3 L1292.0,550.8 L1277.9,550.8 L1274.4,547.3 L1274.4,524.9" stroke-width="3.2"/><circle cx="1319.2" cy="519.0" r="17.7" stroke-width="3.2"/><path d="M1301.5,560.7 A17.7,17.7 0 0 1 1336.9,560.7" stroke-width="3.2"/><path d="M1338.0,561.4 L1338.0,648.7 L1351.0,662.8 L1395.8,662.8 L1399.3,656.9 L1405.2,655.8 L1409.9,649.9 L1409.9,605.1" stroke-width="3.2"/><path d="M1299.1,587.4 L1335.7,587.4 L1335.7,620.4 L1299.1,620.4 L1299.1,587.4" stroke-width="3.2"/><path d="M1296.8,579.1 L1318.0,579.1" stroke-width="3.2"/><path d="M1295.6,581.5 L1295.6,605.1 L1299.1,611.0" stroke-width="3.2"/><path d="M1203.6,634.5 L1279.1,634.5 L1301.5,654.6 L1322.7,654.6 L1325.1,651.0 L1325.1,638.1 L1320.3,634.5 L1307.4,634.5 L1299.1,626.3 L1299.1,620.4" stroke-width="3.2"/><path d="M1348.6,636.9 L1352.2,634.5 L1367.5,634.5 L1371.0,638.1 L1371.0,653.4 L1367.5,656.5 L1352.2,656.5 L1348.6,653.4 L1348.6,636.9" stroke-width="3.2"/><path d="M1378.1,636.9 L1381.6,634.5 L1397.0,634.5 L1400.5,638.1 L1400.5,653.4 L1397.0,656.5 L1381.6,656.5 L1378.1,653.4 L1378.1,636.9" stroke-width="3.2"/><path d="M1339.2,440.0 L1351.0,449.4 L1395.8,449.4 L1407.6,440.0" stroke-width="3.2"/><path d="M1419.4,440.0 L1435.9,454.1 L1531.4,454.1 L1531.4,632.2 L1470.1,632.2 L1470.1,602.7 L1474.8,598.0 L1474.8,573.2 L1471.2,569.2 L1454.7,569.2 L1451.2,572.0 L1451.2,590.9 L1443.0,588.5" stroke-width="3.2"/><path d="M1453.6,539.0 L1457.1,536.2 L1471.2,536.2 L1474.8,540.2 L1474.8,565.0 L1471.2,568.5 L1457.1,568.5 L1453.6,565.0 L1453.6,539.0" stroke-width="3.2"/><path d="M1500.7,540.2 L1504.3,536.2 L1521.9,536.2 L1525.5,541.4 L1526.7,628.6 L1507.8,628.6 L1505.4,602.7 L1501.9,598.0 L1501.9,574.4 L1505.4,569.7 L1501.9,565.0 L1500.7,540.2" stroke-width="3.2"/><circle cx="1428.8" cy="560.7" r="17.7" stroke-width="3.2"/><path d="M1442.4,614.1 A17.7,17.7 0 1 1 1444.1,593.8" stroke-width="3.2"/><path d="M1452.4,612.1 L1452.4,632.2 L1441.8,628.6" stroke-width="3.2"/><path d="M1437.6,667.9 A20.0,20.0 0 1 1 1442.7,629.2" stroke-width="3.2"/><path d="M1437.1,667.5 L1531.4,667.5 L1531.4,680.0" stroke-width="3.2"/><path d="M1168.3,660.0 L1168.3,806.2 L1174.1,820.3 L1207.2,848.6 L1279.1,848.6 L1299.1,868.7 L1322.7,868.7 L1325.1,865.1 L1325.1,853.4 L1321.5,849.8 L1308.5,849.8 L1299.1,840.4 L1299.1,834.5" stroke-width="3.2"/><path d="M1203.6,660.0 L1203.6,796.8 L1218.9,812.1 L1276.7,812.1 L1276.7,799.1 L1274.4,794.4 L1274.4,707.2 L1280.3,702.4 L1393.4,702.4 L1409.9,717.8 L1409.9,752.0 L1448.8,752.0 L1448.8,717.8 L1409.9,717.8" stroke-width="3.2"/><path d="M1274.4,770.8 L1277.9,767.3 L1302.7,767.3" stroke-width="3.2"/><path d="M1224.8,709.5 L1228.4,704.8 L1241.3,704.8 L1244.9,709.5 L1244.9,733.1 L1248.4,737.8 L1248.4,763.7 L1244.9,767.3 L1248.4,772.0 L1248.4,796.8 L1243.7,801.5 L1229.6,801.5 L1224.8,796.8 L1224.8,709.5" stroke-width="3.2"/><path d="M1448.8,752.0 L1473.6,752.0 L1474.8,754.3 L1474.8,782.6 L1471.2,786.1 L1459.5,783.8 L1452.4,788.5 L1451.2,806.2 L1443.0,802.7" stroke-width="3.2"/><path d="M1301.5,776.0 A17.7,17.7 0 1 1 1335.8,782.1" stroke-width="3.2"/><path d="M1336.8,785.0 L1338.0,792.0 L1338.0,862.8 L1351.0,878.1 L1395.8,878.1 L1409.9,864.0 L1409.9,820.3" stroke-width="3.2"/><path d="M1442.4,829.4 A17.7,17.7 0 1 1 1444.1,809.1" stroke-width="3.2"/><path d="M1302.7,802.7 L1335.7,802.7 L1335.7,835.7 L1302.7,835.7 L1302.7,802.7" stroke-width="3.2"/><path d="M1316.8,795.6 L1295.6,795.6 L1295.6,822.7 L1299.1,829.8 L1299.1,835.7" stroke-width="3.2"/><path d="M1452.4,827.4 L1452.4,846.3 L1443.0,842.7" stroke-width="3.2"/><path d="M1437.6,883.2 A20.0,20.0 0 1 1 1442.7,844.5" stroke-width="3.2"/><path d="M1438.2,882.8 L1531.4,882.8 L1539.6,880.5 L1566.7,848.6 L1566.7,660.0" stroke-width="3.2"/><path d="M1474.8,787.3 L1474.8,810.9 L1470.1,815.6 L1470.1,846.3 L1521.9,846.3 L1531.4,836.8 L1531.4,668.3 L1438.2,668.3 L1424.1,660.0" stroke-width="3.2"/><path d="M1500.7,754.3 L1505.4,749.6 L1521.9,749.6 L1526.7,754.3 L1526.7,839.2 L1520.8,843.9 L1507.8,843.9 L1505.4,815.6 L1501.9,810.9 L1501.9,789.7 L1505.4,785.0 L1501.9,780.3 L1500.7,754.3" stroke-width="3.2"/><path d="M1346.3,660.0 L1351.0,664.7 L1395.8,664.7 L1400.5,660.0" stroke-width="3.2"/><path d="M1168.3,520.0 L1168.3,670.0" stroke-width="3.2"/><path d="M1566.8,460.0 L1566.8,670.0" stroke-width="3.2"/><path d="M710.4,381.2 L733.3,381.2" stroke-width="3.2"/><path d="M734.4,370.8 L734.4,383.2" stroke-width="3.9"/><path d="M735.4,381.2 L736.5,384.4 L739.6,387.5 L758.3,387.5 L762.5,383.3 L762.5,372.3" stroke-width="3.2"/><path d="M762.5,372.3 L868.0,372.3" stroke-width="3.2"/><path d="M792.7,372.3 L792.7,411.2" stroke-width="3.2"/><path d="M817.7,411.2 L817.7,378.2 L820.8,377.1 L834.4,377.1 L837.5,380.2 L838.5,384.4 L857.3,384.4 L863.5,387.5 L863.5,397.9 L859.4,401.0 L838.5,401.0 L837.5,406.2 L833.3,409.4 L819.0,409.4" stroke-width="3.2"/><path d="M710.4,406.2 L733.3,406.2" stroke-width="3.2"/><path d="M734.4,406.2 L734.4,412.5" stroke-width="3.9"/><path d="M735.4,406.2 L739.6,399.0 L758.3,399.0 L762.5,402.1 L762.5,411.2" stroke-width="3.2"/><path d="M762.5,411.2 L860.4,411.2 L863.5,413.7" stroke-width="3.2"/><path d="M709.9,421.8 L718.2,421.8 L721.0,425.2 L718.2,430.2 L709.9,430.7" stroke-width="3.2"/><path d="M721.0,427.7 L862.0,427.7" stroke-width="3.2"/><path d="M710.4,448.1 L733.3,448.1" stroke-width="3.2"/><path d="M734.4,442.0 L734.4,450.1" stroke-width="3.9"/><path d="M735.4,448.1 L736.5,451.3 L739.6,454.4 L758.3,454.4 L762.5,450.2 L762.5,443.5" stroke-width="3.2"/><path d="M762.5,443.5 L868.0,443.5" stroke-width="3.2"/><path d="M792.7,443.5 L792.7,478.1" stroke-width="3.2"/><path d="M817.7,478.1 L817.7,445.1 L820.8,444.0 L834.4,444.0 L837.5,447.1 L838.5,451.3 L857.3,451.3 L863.5,454.4 L863.5,464.8 L859.4,467.9 L838.5,467.9 L837.5,473.1 L833.3,476.3 L819.0,476.3" stroke-width="3.2"/><path d="M710.4,473.1 L733.3,473.1" stroke-width="3.2"/><path d="M734.4,473.1 L734.4,479.4" stroke-width="3.9"/><path d="M735.4,473.1 L739.6,465.9 L758.3,465.9 L762.5,469.0 L762.5,478.1" stroke-width="3.2"/><path d="M762.5,478.1 L860.4,478.1 L863.5,480.6" stroke-width="3.2"/><path d="M709.9,488.7 L718.2,488.7 L721.0,492.1 L718.2,497.1 L709.9,497.6" stroke-width="3.2"/><path d="M721.0,494.6 L862.0,494.6" stroke-width="3.2"/><path d="M710.4,515.2 L733.3,515.2" stroke-width="3.2"/><path d="M734.4,509.3 L734.4,517.2" stroke-width="3.9"/><path d="M735.4,515.2 L736.5,518.4 L739.6,521.5 L758.3,521.5 L762.5,517.3 L762.5,510.8" stroke-width="3.2"/><path d="M762.5,510.8 L868.0,510.8" stroke-width="3.2"/><path d="M792.7,510.8 L792.7,545.2" stroke-width="3.2"/><path d="M817.7,545.2 L817.7,512.2 L820.8,511.1 L834.4,511.1 L837.5,514.2 L838.5,518.4 L857.3,518.4 L863.5,521.5 L863.5,531.9 L859.4,535.0 L838.5,535.0 L837.5,540.2 L833.3,543.4 L819.0,543.4" stroke-width="3.2"/><path d="M710.4,540.2 L733.3,540.2" stroke-width="3.2"/><path d="M734.4,540.2 L734.4,546.5" stroke-width="3.9"/><path d="M735.4,540.2 L739.6,533.0 L758.3,533.0 L762.5,536.1 L762.5,545.2" stroke-width="3.2"/><path d="M762.5,545.2 L860.4,545.2 L863.5,547.7" stroke-width="3.2"/><path d="M709.9,555.8 L718.2,555.8 L721.0,559.2 L718.2,564.2 L709.9,564.7" stroke-width="3.2"/><path d="M721.0,561.7 L862.0,561.7" stroke-width="3.2"/><path d="M710.4,582.8 L733.3,582.8" stroke-width="3.2"/><path d="M734.4,576.5 L734.4,584.8" stroke-width="3.9"/><path d="M735.4,582.8 L736.5,586.0 L739.6,589.1 L758.3,589.1 L762.5,584.9 L762.5,578.0" stroke-width="3.2"/><path d="M762.5,578.0 L868.0,578.0" stroke-width="3.2"/><path d="M792.7,578.0 L792.7,612.8" stroke-width="3.2"/><path d="M817.7,612.8 L817.7,579.8 L820.8,578.7 L834.4,578.7 L837.5,581.8 L838.5,586.0 L857.3,586.0 L863.5,589.1 L863.5,599.5 L859.4,602.6 L838.5,602.6 L837.5,607.8 L833.3,611.0 L819.0,611.0" stroke-width="3.2"/><path d="M710.4,607.8 L733.3,607.8" stroke-width="3.2"/><path d="M734.4,607.8 L734.4,614.1" stroke-width="3.9"/><path d="M735.4,607.8 L739.6,600.6 L758.3,600.6 L762.5,603.7 L762.5,612.8" stroke-width="3.2"/><path d="M762.5,612.8 L860.4,612.8 L863.5,615.3" stroke-width="3.2"/><path d="M709.9,623.4 L718.2,623.4 L721.0,626.8 L718.2,631.8 L709.9,632.3" stroke-width="3.2"/><path d="M721.0,629.3 L862.0,629.3" stroke-width="3.2"/><path d="M710.4,649.9 L733.3,649.9" stroke-width="3.2"/><path d="M734.4,643.6 L734.4,651.9" stroke-width="3.9"/><path d="M735.4,649.9 L736.5,653.1 L739.6,656.2 L758.3,656.2 L762.5,652.0 L762.5,645.1" stroke-width="3.2"/><path d="M762.5,645.1 L868.0,645.1" stroke-width="3.2"/><path d="M792.7,645.1 L792.7,679.9" stroke-width="3.2"/><path d="M817.7,679.9 L817.7,646.9 L820.8,645.8 L834.4,645.8 L837.5,648.9 L838.5,653.1 L857.3,653.1 L863.5,656.2 L863.5,666.6 L859.4,669.7 L838.5,669.7 L837.5,674.9 L833.3,678.1 L819.0,678.1" stroke-width="3.2"/><path d="M710.4,674.9 L733.3,674.9" stroke-width="3.2"/><path d="M734.4,674.9 L734.4,681.2" stroke-width="3.9"/><path d="M735.4,674.9 L739.6,667.7 L758.3,667.7 L762.5,670.8 L762.5,679.9" stroke-width="3.2"/><path d="M762.5,679.9 L860.4,679.9 L863.5,682.4" stroke-width="3.2"/><path d="M709.9,690.5 L718.2,690.5 L721.0,693.9 L718.2,698.9 L709.9,699.4" stroke-width="3.2"/><path d="M721.0,696.4 L862.0,696.4" stroke-width="3.2"/><path d="M710.4,716.8 L733.3,716.8" stroke-width="3.2"/><path d="M734.4,710.5 L734.4,718.8" stroke-width="3.9"/><path d="M735.4,716.8 L736.5,720.0 L739.6,723.1 L758.3,723.1 L762.5,718.9 L762.5,712.0" stroke-width="3.2"/><path d="M762.5,712.0 L868.0,712.0" stroke-width="3.2"/><path d="M792.7,712.0 L792.7,746.8" stroke-width="3.2"/><rect x="817.3" y="714.3" width="21.2" height="31.4" rx="3" stroke-width="3.2"/><rect x="845.6" y="720.6" width="18.9" height="15.7" rx="4" stroke-width="3.2"/><path d="M710.4,741.8 L733.3,741.8" stroke-width="3.2"/><path d="M734.4,741.8 L734.4,748.1" stroke-width="3.9"/><path d="M735.4,741.8 L739.6,734.6 L758.3,734.6 L762.5,737.7 L762.5,746.8" stroke-width="3.2"/><path d="M762.5,746.8 L860.4,746.8 L863.5,749.3" stroke-width="3.2"/><path d="M726.0,356.2 L875.0,356.2 L876.5,354.7 L892.7,354.7 L894.8,356.0" stroke-width="3.2"/><path d="M709.9,421.9 L709.9,364.6 L711.5,363.0 L718.2,363.0 L726.0,356.2" stroke-width="3.2"/><path d="M868.0,372.3 L876.0,373.0 L894.8,373.0" stroke-width="3.2"/><path d="M863.5,411.2 L865.6,418.5 L868.8,418.5 L871.9,412.2 L877.0,410.4 L894.8,410.4" stroke-width="3.2"/><path d="M862.0,427.7 L866.0,426.0 L872.0,419.0" stroke-width="3.2"/><path d="M868.0,443.5 L875.5,439.4 L884.1,428.6 L887.4,426.4 L895.0,426.4 L895.0,489.0" stroke-width="3.2"/><path d="M863.5,480.6 L864.7,491.2 L868.0,494.5 L874.4,489.1 L895.0,489.1" stroke-width="3.2"/><path d="M868.0,510.8 L883.0,510.8 L886.3,507.4 L895.0,507.4 L895.0,546.0" stroke-width="3.2"/><path d="M863.5,547.7 L864.7,557.0 L866.2,557.7 L873.3,550.6 L878.0,544.7 L894.5,543.5" stroke-width="3.2"/><path d="M862.0,561.7 L866.0,560.0 L873.0,552.0" stroke-width="3.2"/><path d="M868.0,578.0 L878.0,570.6 L887.4,562.4 L894.5,561.2 L894.5,624.9" stroke-width="3.2"/><path d="M863.5,615.3 L862.7,626.0 L866.2,629.1 L870.9,629.1 L873.3,626.0 L893.3,625.3" stroke-width="3.2"/><path d="M719.0,629.4 L866.0,629.4" stroke-width="3.2"/><path d="M868.0,645.1 L884.9,645.1 L886.5,643.6 L894.3,643.6" stroke-width="3.2"/><path d="M895.1,628.6 L895.1,665.6 L883.3,677.4 L875.5,680.5 L872.3,683.7 L871.5,689.2 L867.6,693.1 L863.7,691.5 L863.7,682.9 L861.3,680.5" stroke-width="3.2"/><path d="M862.9,696.2 L867.6,695.4 L872.3,690.7" stroke-width="3.2"/><path d="M910.8,620.0 L910.8,673.4 L895.9,687.6 L894.3,695.4 L891.2,698.6 L884.9,698.6 L870.7,711.9 L840.1,711.9 L837.7,712.7" stroke-width="3.2"/><path d="M862.9,626.3 L867.6,628.6 L872.3,627.1 L875.5,625.5 L894.3,624.7 L894.3,620.0" stroke-width="3.2"/><path d="M861.3,746.5 L864.5,748.9 L864.5,760.7 L861.3,763.0 L708.9,763.0 L693.9,748.1 L693.9,620.0" stroke-width="3.2"/><path d="M709.6,627.1 L709.6,744.2" stroke-width="3.2"/><path d="M709.9,421.9 L709.9,745.0" stroke-width="3.2"/><path d="M910.8,525.0 L910.8,620.0" stroke-width="3.2"/><path d="M504.3,426.4 L504.3,420.0 L473.0,420.0 L473.0,451.3 L504.3,451.3 L504.3,440.5" stroke-width="3.2"/><path d="M489.0,435.0 L512.0,435.0 L538.5,462.0 L538.5,500.0" stroke-width="14.3"/><path d="M489.0,477.0 L512.0,499.0 L514.0,507.0 L526.0,521.0 L538.0,523.0" stroke-width="13.8"/><path d="M489.0,519.0 L505.0,530.0 L524.0,548.0 L538.0,548.0" stroke-width="13.8"/><path d="M489.0,561.0 L500.0,573.0 L538.0,573.0" stroke-width="13.8"/><path d="M489.0,603.0 L500.0,598.5 L538.0,598.5" stroke-width="13.8"/><path d="M489.0,645.0 L512.0,624.0 L538.0,624.0" stroke-width="13.8"/><path d="M539.0,495.0 L539.0,505.0" stroke-width="18.8"/><path d="M539.0,517.0 L539.0,529.0" stroke-width="18.8"/><path d="M539.0,542.0 L539.0,554.0" stroke-width="18.8"/><path d="M539.0,567.0 L539.0,579.0" stroke-width="18.8"/><path d="M539.0,592.0 L539.0,604.0" stroke-width="18.8"/><path d="M539.0,617.0 L539.0,630.0" stroke-width="18.8"/><path d="M564.5,495.0 L564.5,502.0" stroke-width="18.8"/><path d="M564.5,515.0 L564.5,527.0" stroke-width="18.8"/><path d="M564.5,540.0 L564.5,553.0" stroke-width="18.8"/><path d="M564.5,566.0 L564.5,578.0" stroke-width="18.8"/><path d="M564.5,591.0 L564.5,603.0" stroke-width="18.8"/><path d="M564.5,616.0 L564.5,628.0" stroke-width="18.8"/><path d="M564.8,499.0 L564.8,405.0 L600.0,371.0 L620.0,371.0" stroke-width="13.8"/><path d="M614.0,372.0 L621.0,372.0" stroke-width="18.8" stroke-linecap="square" stroke-linejoin="miter"/><path d="M565.0,522.0 L588.5,500.0 L588.5,455.0 L605.0,439.5 L620.0,439.5" stroke-width="13.8"/><path d="M613.0,439.5 L622.0,439.5" stroke-width="17.8" stroke-linecap="square" stroke-linejoin="miter"/><path d="M565.0,546.0 L604.0,507.0 L620.0,505.4" stroke-width="13.8"/><path d="M614.5,505.4 L622.5,505.4" stroke-width="17.8" stroke-linecap="square" stroke-linejoin="miter"/><path d="M565.0,573.0 L620.0,573.0" stroke-width="15.8"/><path d="M615.5,573.5 L621.5,573.5" stroke-width="19.8" stroke-linecap="square" stroke-linejoin="miter"/><path d="M565.0,597.0 L588.0,618.0 L600.0,628.0 L620.0,628.0" stroke-width="13.8"/><path d="M613.0,628.0 L624.0,628.0" stroke-width="13.8" stroke-linecap="square" stroke-linejoin="miter"/><path d="M565.9,631.3 L565.9,689.7 L585.4,709.0 L620.0,709.0" stroke-width="15.8"/><path d="M615.0,708.6 L622.0,708.6" stroke-width="18.8" stroke-linecap="square" stroke-linejoin="miter"/><path d="M600.0,418.9 L600.0,424.3 L604.8,428.6 L628.6,428.6 L635.0,423.2 L635.0,418.9" stroke-width="3.2"/><path d="M600.0,484.5 L600.0,489.9 L604.8,494.2 L628.6,494.2 L635.0,488.8 L635.0,484.5" stroke-width="3.2"/><path d="M600.0,551.0 L600.0,556.4 L604.8,560.7 L628.6,560.7 L635.0,555.3 L635.0,551.0" stroke-width="3.2"/><path d="M600.0,619.0 L600.0,624.4 L604.8,628.7 L628.6,628.7 L635.0,623.3 L635.0,619.0" stroke-width="3.2"/><path d="M600.0,686.5 L600.0,691.9 L604.8,696.2 L628.6,696.2 L635.0,690.8 L635.0,686.5" stroke-width="3.2"/><circle cx="489.0" cy="477.0" r="15.2" stroke-width="3.2"/><circle cx="489.0" cy="519.0" r="15.2" stroke-width="3.2"/><circle cx="489.0" cy="561.0" r="15.2" stroke-width="3.2"/><circle cx="489.0" cy="603.0" r="15.2" stroke-width="3.2"/><circle cx="489.0" cy="645.0" r="15.2" stroke-width="3.2"/><circle cx="489.0" cy="687.5" r="17.0" stroke-width="4.1"/><path d="M483.5,659 L494.5,659 L495.5,667 L482.5,667 Z" stroke-width="-0.1" fill="#606cff"/><path d="M709.2,469.6 L712.4,472.9 L710.2,478.3 L696.2,489.1 L694.0,495.5 L694.0,625.0" stroke-width="3.2"/><path d="M1204.0,418.0 L1204.0,445.0" stroke-width="3.2"/><path d="M1203.6,630.0 L1203.6,665.0" stroke-width="3.2"/></g>
<g fill="none" stroke="#ccf38c" stroke-linejoin="round" stroke-linecap="round"><path d="M489.0,435.0 L512.0,435.0 L538.5,462.0 L538.5,500.0" stroke-width="7.6"/><path d="M489.0,477.0 L512.0,499.0 L514.0,507.0 L526.0,521.0 L538.0,523.0" stroke-width="7.1"/><path d="M489.0,519.0 L505.0,530.0 L524.0,548.0 L538.0,548.0" stroke-width="7.1"/><path d="M489.0,561.0 L500.0,573.0 L538.0,573.0" stroke-width="7.1"/><path d="M489.0,603.0 L500.0,598.5 L538.0,598.5" stroke-width="7.1"/><path d="M489.0,645.0 L512.0,624.0 L538.0,624.0" stroke-width="7.1"/><path d="M539.0,495.0 L539.0,505.0" stroke-width="12.1"/><path d="M539.0,517.0 L539.0,529.0" stroke-width="12.1"/><path d="M539.0,542.0 L539.0,554.0" stroke-width="12.1"/><path d="M539.0,567.0 L539.0,579.0" stroke-width="12.1"/><path d="M539.0,592.0 L539.0,604.0" stroke-width="12.1"/><path d="M539.0,617.0 L539.0,630.0" stroke-width="12.1"/><path d="M564.5,495.0 L564.5,502.0" stroke-width="12.1"/><path d="M564.5,515.0 L564.5,527.0" stroke-width="12.1"/><path d="M564.5,540.0 L564.5,553.0" stroke-width="12.1"/><path d="M564.5,566.0 L564.5,578.0" stroke-width="12.1"/><path d="M564.5,591.0 L564.5,603.0" stroke-width="12.1"/><path d="M564.5,616.0 L564.5,628.0" stroke-width="12.1"/><path d="M564.8,499.0 L564.8,405.0 L600.0,371.0 L620.0,371.0" stroke-width="7.1"/><path d="M614.0,372.0 L621.0,372.0" stroke-width="12.1" stroke-linecap="square" stroke-linejoin="miter"/><path d="M565.0,522.0 L588.5,500.0 L588.5,455.0 L605.0,439.5 L620.0,439.5" stroke-width="7.1"/><path d="M613.0,439.5 L622.0,439.5" stroke-width="11.1" stroke-linecap="square" stroke-linejoin="miter"/><path d="M565.0,546.0 L604.0,507.0 L620.0,505.4" stroke-width="7.1"/><path d="M614.5,505.4 L622.5,505.4" stroke-width="11.1" stroke-linecap="square" stroke-linejoin="miter"/><path d="M565.0,573.0 L620.0,573.0" stroke-width="9.1"/><path d="M615.5,573.5 L621.5,573.5" stroke-width="13.1" stroke-linecap="square" stroke-linejoin="miter"/><path d="M565.0,597.0 L588.0,618.0 L600.0,628.0 L620.0,628.0" stroke-width="7.1"/><path d="M613.0,628.0 L624.0,628.0" stroke-width="7.1" stroke-linecap="square" stroke-linejoin="miter"/><path d="M565.9,631.3 L565.9,689.7 L585.4,709.0 L620.0,709.0" stroke-width="9.1"/><path d="M615.0,708.6 L622.0,708.6" stroke-width="12.1" stroke-linecap="square" stroke-linejoin="miter"/></g>
<g fill="#606cff" stroke="#4a56e6" stroke-width="0.6"><circle cx="1429.1" cy="303.9" r="9.0"/><circle cx="1318.7" cy="304.0" r="9.0"/><circle cx="1429.1" cy="346.4" r="9.0"/><circle cx="1318.7" cy="346.4" r="9.0"/><circle cx="1429.1" cy="388.1" r="9.0"/><circle cx="1318.7" cy="388.2" r="9.0"/><circle cx="1319.2" cy="519.0" r="9.0"/><circle cx="1319.2" cy="560.7" r="9.0"/><circle cx="1319.2" cy="602.7" r="9.0"/><circle cx="1428.8" cy="519.0" r="9.0"/><circle cx="1428.8" cy="560.7" r="9.0"/><circle cx="1428.8" cy="602.7" r="9.0"/><circle cx="1319.2" cy="734.3" r="9.0"/><circle cx="1319.2" cy="776.0" r="9.0"/><circle cx="1319.2" cy="818.0" r="9.0"/><circle cx="1428.8" cy="734.3" r="9.0"/><circle cx="1428.8" cy="776.0" r="9.0"/><circle cx="1428.8" cy="818.0" r="9.0"/><circle cx="489.0" cy="435.4" r="8.5"/><rect x="599" y="735.5" width="14.6" height="8.8" rx="4"/><rect x="621.6" y="735.5" width="14.7" height="10.9" rx="4"/><rect x="599" y="753.8" width="14.6" height="11.9" rx="4"/><rect x="621.6" y="753.8" width="14.7" height="11.9" rx="4"/><path d="M598,411.6 V402.6 Q598,399.6 602,399.6 H615 V404.1 H603 Q601.5,404.1 601.5,405.6 V411.6 Z"/><path d="M620,411.6 V402.6 Q620,399.6 624,399.6 H637 V404.1 H625 Q623.5,404.1 623.5,405.6 V411.6 Z"/><path d="M598,478.2 V468.5 Q598,465.5 602,465.5 H615 V470.0 H603 Q601.5,470.0 601.5,471.5 V478.2 Z"/><path d="M620,478.2 V468.5 Q620,465.5 624,465.5 H637 V470.0 H625 Q623.5,470.0 623.5,471.5 V478.2 Z"/><path d="M598,543.5 V534 Q598,531 602,531 H615 V535.5 H603 Q601.5,535.5 601.5,537 V543.5 Z"/><path d="M620,543.5 V534 Q620,531 624,531 H637 V535.5 H625 Q623.5,535.5 623.5,537 V543.5 Z"/><path d="M598,613 V602 Q598,599 602,599 H615 V603.5 H603 Q601.5,603.5 601.5,605 V613 Z"/><path d="M620,613 V602 Q620,599 624,599 H637 V603.5 H625 Q623.5,603.5 623.5,605 V613 Z"/><path d="M598,678 V668.5 Q598,665.5 602,665.5 H615 V670.0 H603 Q601.5,670.0 601.5,671.5 V678 Z"/><path d="M620,678 V668.5 Q620,665.5 624,665.5 H637 V670.0 H625 Q623.5,670.0 623.5,671.5 V678 Z"/><circle cx="489.0" cy="477.0" r="8.3"/><circle cx="489.0" cy="519.0" r="8.3"/><circle cx="489.0" cy="561.0" r="8.3"/><circle cx="489.0" cy="603.0" r="8.3"/><circle cx="489.0" cy="645.0" r="8.3"/><circle cx="489.0" cy="687.5" r="8.3"/></g>
<g fill="#ffffff"><path d="M474.3,682.2 A15.6,15.6 0 0 1 486.8,672.1" fill="none" stroke="#fff" stroke-width="0.9"/><path d="M491.2,672.1 A15.6,15.6 0 0 1 503.7,682.2" fill="none" stroke="#fff" stroke-width="0.9"/><path d="M502.8,694.8 A15.6,15.6 0 0 1 496.3,701.3" fill="none" stroke="#fff" stroke-width="0.9"/><path d="M481.7,701.3 A15.6,15.6 0 0 1 475.2,694.8" fill="none" stroke="#fff" stroke-width="0.9"/><path d="M506.0,517.0 L512.0,522.0 L521.0,531.0 L532.0,536.0 L539.0,537.0 L533.0,541.0 L521.0,541.0 L509.0,531.0 Z"/><path d="M646,903.5 Q648.3,899 650.6,903.5 Z"/><path d="M665,903.5 Q669.5,897 674,903.5 Z"/></g>
<g fill="none" stroke="#f0e63c" stroke-linejoin="round" stroke-linecap="round"><path d="M455.5,905.0 L455.5,145.0" stroke-width="8.5" stroke-opacity="0.32"/><path d="M457.8,907.7 L489.0,687.0" stroke-width="8.5" stroke-opacity="0.32"/><path d="M489.0,687.0 L489.0,435.0" stroke-width="8.5" stroke-opacity="0.32"/><path d="M489.0,435.0 L1073.0,344.0" stroke-width="8.5" stroke-opacity="0.32"/><path d="M1068.2,346.0 L1068.2,776.0" stroke-width="8.5" stroke-opacity="0.32"/><path d="M1070.0,776.0 L1319.0,776.0" stroke-width="8.5" stroke-opacity="0.32"/><path d="M1319.0,304.0 L1319.0,818.0" stroke-width="8.5" stroke-opacity="0.32"/><path d="M1319.0,818.0 L1429.0,818.0" stroke-width="8.5" stroke-opacity="0.32"/><path d="M1431.0,818.0 L1431.0,304.0" stroke-width="8.5" stroke-opacity="0.32"/><path d="M1319.0,304.0 L1429.0,304.0" stroke-width="8.5" stroke-opacity="0.32"/><path d="M1319.0,519.0 L1429.0,519.0" stroke-width="8.5" stroke-opacity="0.32"/><path d="M1429.0,388.0 L1732.0,344.0" stroke-width="8.5" stroke-opacity="0.32"/><path d="M1730.0,344.0 L1730.0,773.0" stroke-width="8.5" stroke-opacity="0.32"/><path d="M1429.0,818.0 L1735.0,773.0" stroke-width="8.5" stroke-opacity="0.32"/><path d="M457.8,907.7 L1737.0,773.0" stroke-width="8.5" stroke-opacity="0.32"/><path d="M983.5,347.0 L983.5,776.0" stroke-width="4" stroke-opacity="0.32"/><path d="M1644.8,344.0 L1644.8,776.0" stroke-width="3.5" stroke-opacity="0.32"/><path d="M457.8,907.7 L602.0,758.0" stroke-width="3" stroke-opacity="0.32"/><path d="M602.0,758.0 L632.0,753.0 L694.0,743.0" stroke-width="3" stroke-opacity="0.32"/><path d="M512.0,691.0 L602.0,691.0" stroke-width="3" stroke-opacity="0.32"/><path d="M865.0,718.0 L987.0,776.0" stroke-width="3" stroke-opacity="0.32"/><path d="M987.0,347.0 L1210.0,418.0" stroke-width="3" stroke-opacity="0.32"/><path d="M680.0,158.0 L1385.0,168.0" stroke-width="3" stroke-opacity="0.32"/><path d="M648.0,156.0 L624.0,400.0" stroke-width="3" stroke-opacity="0.32"/><path d="M1203.0,635.0 L1652.0,776.0" stroke-width="3" stroke-opacity="0.32"/><path d="M1455.0,745.0 L1652.0,776.0" stroke-width="3" stroke-opacity="0.32"/><path d="M1510.0,325.0 L1652.0,344.0" stroke-width="3" stroke-opacity="0.32"/><path d="M1460.0,538.0 L1652.0,561.0" stroke-width="3" stroke-opacity="0.32"/><path d="M1275.0,279.0 L1420.0,318.0" stroke-width="3" stroke-opacity="0.32"/><path d="M1206.0,623.0 L1372.0,170.0" stroke-width="3" stroke-opacity="0.32"/><path d="M1275.0,279.0 L1306.0,403.0" stroke-width="3" stroke-opacity="0.32"/><path d="M1229.0,358.0 L1306.0,403.0" stroke-width="3" stroke-opacity="0.32"/><path d="M1210.0,418.0 L1306.0,403.0" stroke-width="3" stroke-opacity="0.32"/><path d="M1341.0,656.0 L1279.0,705.0 L1230.0,781.0" stroke-width="3" stroke-opacity="0.32"/><path d="M1229.0,786.0 L1327.0,797.0" stroke-width="3" stroke-opacity="0.32"/><path d="M1345.0,830.0 L1441.0,833.0" stroke-width="3" stroke-opacity="0.32"/><path d="M457.8,907.7 L477.0,675.0" stroke-width="3" stroke-opacity="0.32"/><path d="M457.8,907.7 L470.0,697.0" stroke-width="3" stroke-opacity="0.32"/><path d="M725.0,360.0 L797.0,375.0 L822.0,379.0 L843.0,403.0 L822.0,446.0 L797.0,442.0 L843.0,470.0 L822.0,515.0 L797.0,509.0 L843.0,537.0 L822.0,581.0 L797.0,576.0 L843.0,604.0 L822.0,648.0 L797.0,644.0 L843.0,672.0 L822.0,715.0 L797.0,711.0 L864.0,716.0" stroke-width="3" stroke-opacity="0.32"/><path d="M694.0,489.0 L716.0,450.0 L725.0,360.0" stroke-width="3" stroke-opacity="0.32"/><path d="M694.0,489.0 L716.0,600.0 L694.0,743.0" stroke-width="3" stroke-opacity="0.32"/><path d="M1319.0,519.0 L1420.0,500.0" stroke-width="3" stroke-opacity="0.32"/><path d="M1385.0,637.0 L1341.0,656.0" stroke-width="3" stroke-opacity="0.32"/><path d="M1420.0,318.0 L1310.0,420.0 L1330.0,560.0" stroke-width="3" stroke-opacity="0.32"/><path d="M1429.0,734.0 L1441.0,833.0" stroke-width="3" stroke-opacity="0.32"/><path d="M1327.0,797.0 L1429.0,818.0" stroke-width="3" stroke-opacity="0.32"/><path d="M1283.0,706.0 L1203.0,635.0" stroke-width="3" stroke-opacity="0.32"/></g>
<g stroke="#a0a0a0" stroke-opacity="0.35" stroke-width="1" stroke-dasharray="1.5,2.5"><line x1="457.7" y1="86" x2="457.7" y2="971"/><line x1="788.3" y1="86" x2="788.3" y2="971"/><line x1="1118.9" y1="86" x2="1118.9" y2="971"/><line x1="1449.5" y1="86" x2="1449.5" y2="971"/><line x1="1780.1" y1="86" x2="1780.1" y2="971"/><line x1="386" y1="907.7" x2="1878" y2="907.7"/><line x1="386" y1="742.4" x2="1878" y2="742.4"/><line x1="386" y1="577.1" x2="1878" y2="577.1"/><line x1="386" y1="411.8" x2="1878" y2="411.8"/><line x1="386" y1="246.5" x2="1878" y2="246.5"/></g>
<g font-family="Liberation Sans" font-size="9.5" fill="#000"><text x="458.0" y="146.2" font-weight="bold">80</text><text x="651.0" y="155.2">170</text><text x="675.0" y="156.2">168</text><text x="506.0" y="428.2">230</text><text x="495.0" y="436.2" font-weight="bold">68</text><text x="475.0" y="479.2">2</text><text x="475.0" y="521.2">2</text><text x="475.0" y="563.2">2</text><text x="475.0" y="605.2">2</text><text x="475.0" y="647.2">2</text><text x="495.0" y="478.2" font-weight="bold">58</text><text x="495.0" y="520.2" font-weight="bold">46</text><text x="495.0" y="562.2" font-weight="bold">38</text><text x="495.0" y="604.2" font-weight="bold">28</text><text x="495.0" y="646.2" font-weight="bold">18</text><text x="495.0" y="688.2" font-weight="bold">80</text><text x="464.0" y="679.2">219</text><text x="463.0" y="698.2">217</text><text x="505.0" y="692.2">215</text><text x="559.0" y="491.2">188</text><text x="559.0" y="516.2">189</text><text x="559.0" y="541.2">190</text><text x="559.0" y="567.2">193</text><text x="559.0" y="592.2">195</text><text x="559.0" y="618.2">197</text><text x="604.0" y="402.2">176</text><text x="625.0" y="404.2">172</text><text x="608.0" y="423.2">177</text><text x="604.0" y="470.2">179</text><text x="625.0" y="472.2">180</text><text x="608.0" y="492.2">182</text><text x="625.0" y="539.2">207</text><text x="606.0" y="557.2">205</text><text x="602.0" y="604.2">201</text><text x="625.0" y="606.2">202</text><text x="604.0" y="625.2">199</text><text x="602.0" y="672.2">210</text><text x="625.0" y="673.2">208</text><text x="606.0" y="692.2">212</text><text x="602.0" y="739.2">8</text><text x="624.0" y="740.2">6</text><text x="602.0" y="756.2">2</text><text x="630.0" y="753.2">9</text><text x="720.0" y="361.2">38</text><text x="710.0" y="383.2">36</text><text x="710.0" y="405.2">35</text><text x="792.0" y="376.2">40</text><text x="817.0" y="380.2">43</text><text x="838.0" y="404.2">45</text><text x="710.0" y="451.2">33</text><text x="792.0" y="443.2">48</text><text x="817.0" y="447.2">46</text><text x="838.0" y="471.2">50</text><text x="694.0" y="491.2">30</text><text x="718.0" y="497.2">28</text><text x="710.0" y="532.2">26</text><text x="718.0" y="554.2">25</text><text x="792.0" y="510.2">55</text><text x="817.0" y="516.2">53</text><text x="838.0" y="538.2">58</text><text x="710.0" y="601.2">23</text><text x="792.0" y="577.2">60</text><text x="817.0" y="582.2">58</text><text x="838.0" y="605.2">63</text><text x="711.0" y="648.2">20</text><text x="710.0" y="667.2">18</text><text x="710.0" y="674.2">16</text><text x="792.0" y="645.2">66</text><text x="817.0" y="649.2">65</text><text x="838.0" y="673.2">68</text><text x="711.0" y="715.2">15</text><text x="710.0" y="734.2">13</text><text x="694.0" y="743.2">10</text><text x="792.0" y="712.2">73</text><text x="817.0" y="716.2">70</text><text x="859.0" y="717.2">75</text><text x="983.0" y="347.2" font-weight="bold">85</text><text x="1068.0" y="347.2" font-weight="bold">79</text><text x="983.0" y="562.2" font-weight="bold">83</text><text x="1068.0" y="562.2" font-weight="bold">90</text><text x="983.0" y="777.2" font-weight="bold">79</text><text x="1068.0" y="777.2" font-weight="bold">901</text><text x="1380.0" y="169.2">167</text><text x="1275.0" y="280.2">98</text><text x="1224.0" y="360.2" font-weight="bold">93</text><text x="1301.0" y="404.2">95</text><text x="1321.0" y="368.2">96</text><text x="1205.0" y="419.2">88</text><text x="1325.0" y="303.2" font-weight="bold">240</text><text x="1325.0" y="345.2" font-weight="bold">230</text><text x="1325.0" y="387.2" font-weight="bold">220</text><text x="1435.0" y="303.2" font-weight="bold">250</text><text x="1435.0" y="345.2" font-weight="bold">260</text><text x="1435.0" y="387.2" font-weight="bold">270</text><text x="1415.0" y="319.2">101</text><text x="1505.0" y="326.2">102</text><text x="1647.0" y="345.2" font-weight="bold">105</text><text x="1732.0" y="345.2" font-weight="bold">290</text><text x="1647.0" y="560.2" font-weight="bold">109</text><text x="1732.0" y="560.2" font-weight="bold">290</text><text x="1647.0" y="775.2" font-weight="bold">158</text><text x="1732.0" y="775.2" font-weight="bold">300</text><text x="1283.0" y="508.2">128</text><text x="1278.0" y="523.2">127</text><text x="1300.0" y="527.2">125</text><text x="1321.0" y="534.2">123</text><text x="1325.0" y="518.2" font-weight="bold">290</text><text x="1325.0" y="560.2" font-weight="bold">200</text><text x="1325.0" y="602.2" font-weight="bold">220</text><text x="1321.0" y="583.2">130</text><text x="1304.0" y="618.2">132</text><text x="1413.0" y="501.2">121</text><text x="1435.0" y="518.2" font-weight="bold">190</text><text x="1430.0" y="538.2">117</text><text x="1455.0" y="539.2">115</text><text x="1435.0" y="560.2" font-weight="bold">170</text><text x="1430.0" y="576.2">119</text><text x="1435.0" y="602.2" font-weight="bold">160</text><text x="1505.0" y="539.2">112</text><text x="1227.0" y="574.2" font-weight="bold">163</text><text x="1352.0" y="638.2">135</text><text x="1382.0" y="638.2">138</text><text x="1352.0" y="653.2">137</text><text x="1207.0" y="636.2" font-weight="bold">160</text><text x="1278.0" y="707.2">141</text><text x="1325.0" y="733.2" font-weight="bold">120</text><text x="1435.0" y="733.2" font-weight="bold">150</text><text x="1450.0" y="746.2">153</text><text x="1325.0" y="775.2" font-weight="bold">108</text><text x="1435.0" y="775.2" font-weight="bold">140</text><text x="1227.0" y="787.2" font-weight="bold">143</text><text x="1322.0" y="798.2">145</text><text x="1325.0" y="817.2" font-weight="bold">128</text><text x="1435.0" y="817.2" font-weight="bold">130</text><text x="1340.0" y="831.2">149</text><text x="1437.0" y="834.2">150</text><text x="1505.0" y="754.2">158</text><text x="456.0" y="904.2">1</text></g>
</g>
<g font-family="Liberation Sans" font-size="10" fill="#222"><text x="457.7" y="982" text-anchor="middle">0</text><text x="788.3" y="982" text-anchor="middle">20</text><text x="1118.9" y="982" text-anchor="middle">40</text><text x="1449.5" y="982" text-anchor="middle">60</text><text x="1780.1" y="982" text-anchor="middle">80</text><text x="382" y="911.7" text-anchor="end">0</text><text x="382" y="746.4" text-anchor="end">10</text><text x="382" y="581.1" text-anchor="end">20</text><text x="382" y="415.8" text-anchor="end">30</text><text x="382" y="250.5" text-anchor="end">40</text></g>
</svg>
<!-- status -->
<div class="abs" style="left:7.5px;top:1001.5px;width:11px;height:11px;border-radius:50%;background:#c8c8c8;border:1px solid #222"></div>
<div class="abs" style="left:25px;top:1000px;font-size:11.5px;line-height:14px;letter-spacing:0.15px">CNCjob created: 3PholeV2.drl_mill_cnc</div>
<div class="abs" style="left:1542px;top:998px;width:1px;height:17px;background:#bdbdbd"></div>
<div class="abs" style="left:1658px;top:998px;width:1px;height:17px;background:#bdbdbd"></div>
<div class="abs" style="left:1694px;top:998px;width:1px;height:17px;background:#bdbdbd"></div>
<div class="abs" style="left:1900px;top:998px;width:1px;height:17px;background:#bdbdbd"></div>
<div class="abs" style="left:1666px;top:1000px;font-size:11.5px;line-height:14px">[mm]</div>
<div class="abs" style="left:1705px;top:1001.5px;width:12px;height:12px;border-radius:50%;background:#000"></div>
<div class="abs" style="left:1711.5px;top:1005px;width:5px;height:5px;border-radius:50%;background:#fff"></div>
<div class="abs" style="left:1723px;top:1000px;font-size:11.5px;line-height:14px;letter-spacing:0.5px">Idle.</div>
<svg class="abs" style="left:1905px;top:1005px" width="15" height="13"><g fill="#aaa"><rect x="9" y="2" width="1.5" height="1.5"/><rect x="6" y="5" width="1.5" height="1.5"/><rect x="9" y="5" width="1.5" height="1.5"/><rect x="3" y="8" width="1.5" height="1.5"/><rect x="6" y="8" width="1.5" height="1.5"/><rect x="9" y="8" width="1.5" height="1.5"/></g></svg>
</body></html>
